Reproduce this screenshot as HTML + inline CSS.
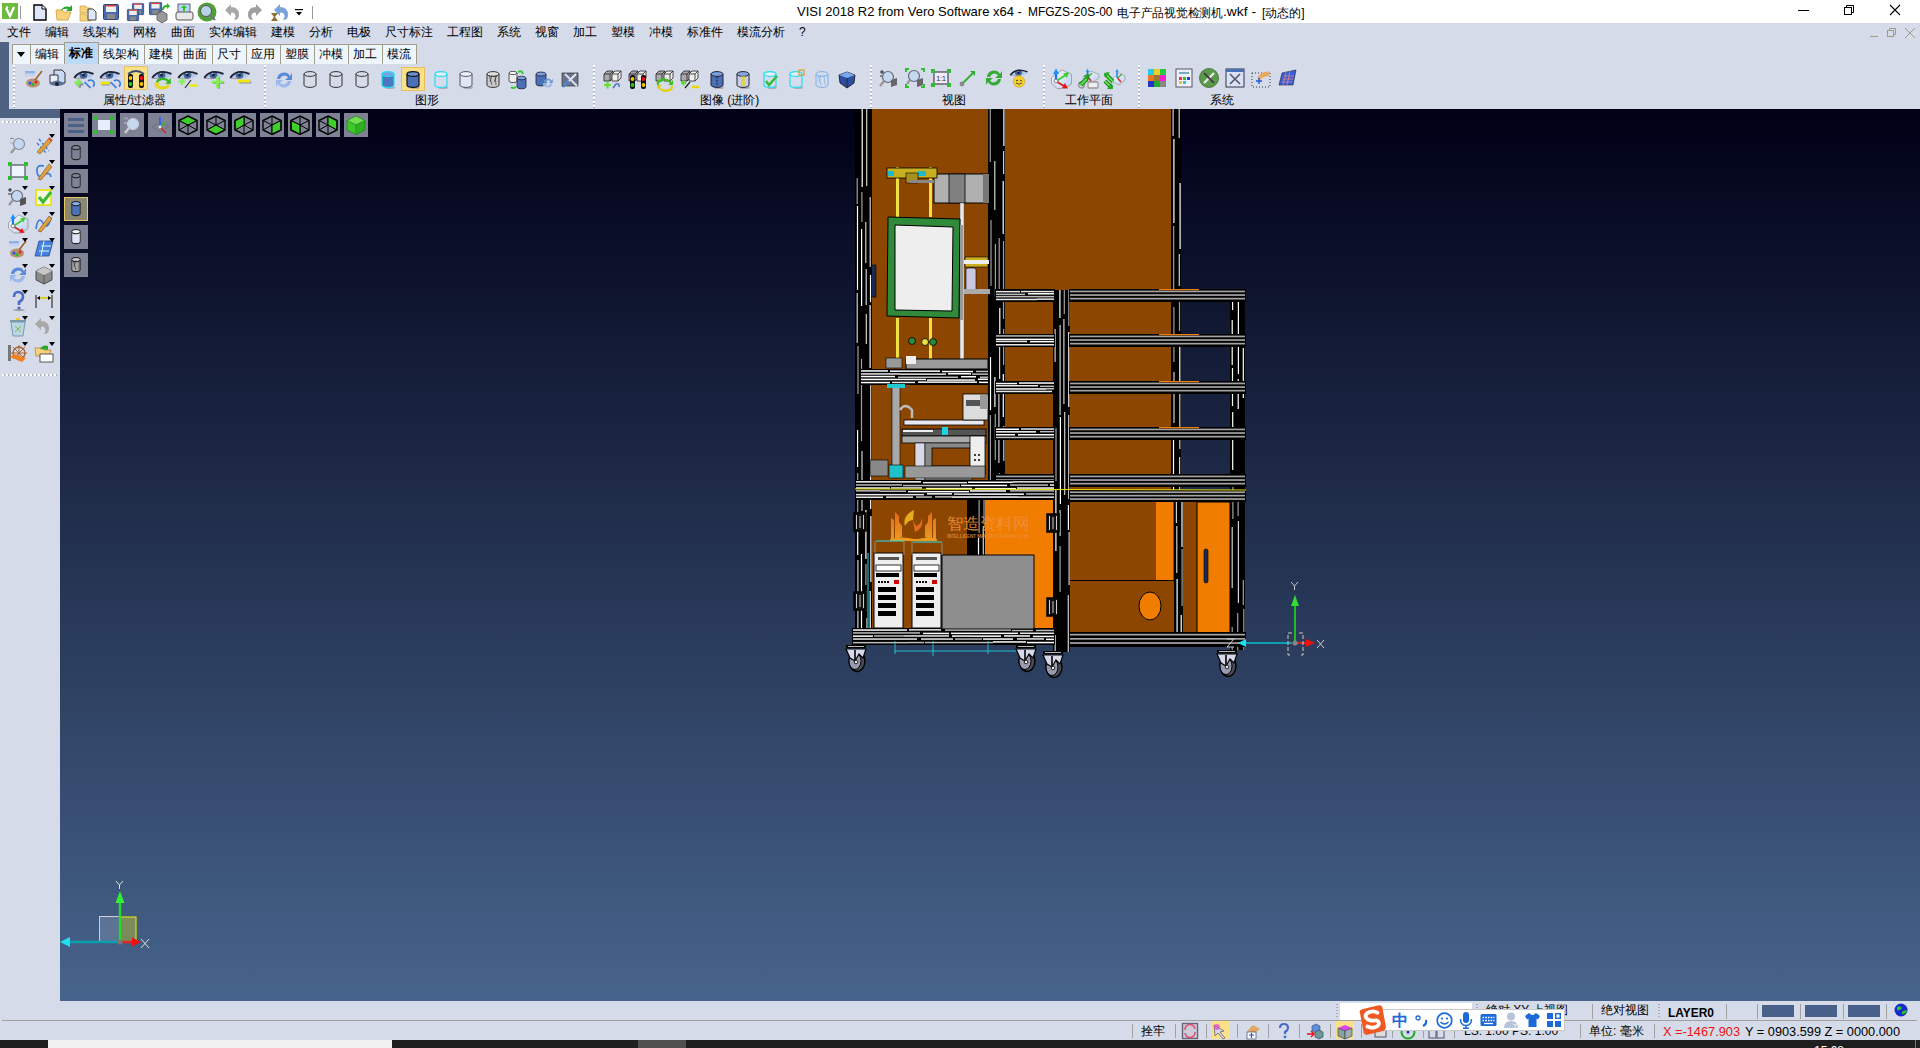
<!DOCTYPE html><html><head><meta charset="utf-8"><style>
*{margin:0;padding:0;box-sizing:border-box}
html,body{width:1920px;height:1048px;overflow:hidden;background:#d5dbe8;font-family:"Liberation Sans",sans-serif;font-size:12px;color:#000;position:relative}
.a{position:absolute}
.t{position:absolute;white-space:nowrap;font-size:12px;line-height:15px}
svg{position:absolute;overflow:visible}
</style></head><body>
<div class="a" style="left:0px;top:0px;width:1920px;height:23px;background:#fff;"></div>
<svg style="left:2px;top:3px" width="16" height="16" viewBox="0 0 16 16"><rect width="16" height="16" fill="#6cbb3c"/><path d="M4 5 L8 13 L12 4" fill="none" stroke="#fff" stroke-width="2.4"/><circle cx="5" cy="4.5" r="1.2" fill="#fff"/></svg>
<div class="a" style="left:20px;top:6px;width:1px;height:13px;background:#9a9a9a;"></div>
<svg style="left:33px;top:4px" width="14" height="17" viewBox="0 0 14 17"><path d="M1 1h8l4 4v11H1z" fill="#dfe8fb" stroke="#000" stroke-width="1.4"/><path d="M9 1v4h4" fill="#fff" stroke="#000" stroke-width="1"/></svg>
<svg style="left:55px;top:4px" width="19" height="17" viewBox="0 0 19 17"><path d="M1 6h6l2 2h7l-3 8H2z" fill="#f8d27a" stroke="#c9a040" stroke-width=".8"/><path d="M6 7 Q8 1 15 3 L17 1 L17 7 L11 7 L13 5 Q9 4 6 7z" fill="#2aa82a"/></svg>
<svg style="left:79px;top:3px" width="18" height="18" viewBox="0 0 18 18"><path d="M1 3h6l1 2h4v5H1z M1 11h6l1 2h4v5H1z" fill="#f6d27c" stroke="#c9a040" stroke-width=".7"/><path d="M9 6h5l3 3v8H9z" fill="#dfe8fb" stroke="#333" stroke-width=".9"/></svg>
<svg style="left:103px;top:4px" width="16" height="16" viewBox="0 0 16 16"><rect x="0.5" y="0.5" width="15" height="15" rx="1" fill="#4a6cae" stroke="#2b4479"/><rect x="3" y="1" width="10" height="7" fill="#eee"/><rect x="3" y="1" width="10" height="1.5" fill="#e04030"/><rect x="4" y="10" width="8" height="5" fill="#888"/></svg>
<svg style="left:132px;top:3px" width="12" height="12" viewBox="0 0 16 16"><rect x="0.5" y="0.5" width="15" height="15" rx="1" fill="#4a6cae" stroke="#2b4479"/><rect x="3" y="1" width="10" height="7" fill="#eee"/><rect x="3" y="1" width="10" height="1.5" fill="#e04030"/><rect x="4" y="10" width="8" height="5" fill="#888"/></svg>
<svg style="left:127px;top:9px" width="12" height="12" viewBox="0 0 16 16"><rect x="0.5" y="0.5" width="15" height="15" rx="1" fill="#4a6cae" stroke="#2b4479"/><rect x="3" y="1" width="10" height="7" fill="#eee"/><rect x="3" y="1" width="10" height="1.5" fill="#e04030"/><rect x="4" y="10" width="8" height="5" fill="#888"/></svg>
<svg style="left:149px;top:2px" width="13" height="13" viewBox="0 0 16 16"><rect x="0.5" y="0.5" width="15" height="15" rx="1" fill="#4a6cae" stroke="#2b4479"/><rect x="3" y="1" width="10" height="7" fill="#eee"/><rect x="3" y="1" width="10" height="1.5" fill="#e04030"/><rect x="4" y="10" width="8" height="5" fill="#888"/></svg>
<svg style="left:156px;top:10px" width="12" height="12" viewBox="0 0 12 12"><path d="M1 4l5-3 5 3v6l-5 3-5-3z" fill="#999" stroke="#555" stroke-width=".8"/></svg>
<svg style="left:160px;top:2px" width="10" height="10" viewBox="0 0 10 10"><path d="M2 8 Q2 3 7 3 L7 1 L10 4 L7 7 L7 5 Q4 5 4 8z" fill="#22bb22"/></svg>
<svg style="left:175px;top:3px" width="19" height="19" viewBox="0 0 19 19"><rect x="3" y="1" width="12" height="9" fill="#bfd4f2" stroke="#445" stroke-width=".8"/><path d="M9 2l3 3h-2v3H8V5H6z" fill="#22cc22"/><rect x="1" y="9" width="17" height="8" rx="2" fill="#e8e8e8" stroke="#555"/></svg>
<svg style="left:197px;top:2px" width="21" height="20" viewBox="0 0 21 20"><circle cx="10" cy="10" r="9.5" fill="#4fa03a"/><circle cx="9" cy="9" r="5.5" fill="#b8d2ec" stroke="#555" stroke-width="1"/><path d="M13 13l5 5" stroke="#777" stroke-width="2.4"/></svg>
<svg style="left:224px;top:3px" width="16" height="18" viewBox="0 0 16 18"><path d="M1 7 L7 1 V4 Q15 4 15 12 Q15 17 10 17 Q13 13 10 10 Q8 9 7 10 V13z" fill="#a8a8a8"/></svg>
<svg style="left:247px;top:3px" width="16" height="18" viewBox="0 0 16 18"><path d="M15 7 L9 1 V4 Q1 4 1 12 Q1 17 6 17 Q3 13 6 10 Q8 9 9 10 V13z" fill="#a0a0a0"/></svg>
<svg style="left:270px;top:3px" width="20" height="19" viewBox="0 0 20 19"><path d="M4 7 L10 1 V4 Q18 4 18 12 Q18 17 13 17 Q16 13 13 10 Q11 9 10 10 V13z" fill="#7aa4dc"/><path d="M1 10h7l-3 4 3 4H1l3-4z" fill="#8a7030"/></svg>
<svg style="left:295px;top:9px" width="8" height="7" viewBox="0 0 8 7"><rect x="0" y="0" width="8" height="1.2" fill="#000"/><path d="M1 3h6l-3 3.5z" fill="#000"/></svg>
<div class="a" style="left:312px;top:6px;width:1px;height:13px;background:#9a9a9a;"></div>
<svg style="left:797px;top:3.5999999999999996px" width="229" height="18.4" viewBox="797 3.5999999999999996 229 18.4"><text x="797" y="16" font-size="12.4" fill="#000" font-weight="normal" font-family="Liberation Sans, sans-serif" textLength="225" lengthAdjust="spacingAndGlyphs">VISI 2018 R2 from Vero Software x64 -</text></svg>
<svg style="left:1027.5px;top:3.5999999999999996px" width="88.5" height="18.4" viewBox="1027.5 3.5999999999999996 88.5 18.4"><text x="1027.5" y="16" font-size="12.4" fill="#000" font-weight="normal" font-family="Liberation Sans, sans-serif" textLength="84.5" lengthAdjust="spacingAndGlyphs">MFGZS-20S-00</text></svg>
<svg style="left:1117px;top:4.5px" width="110" height="18" viewBox="1117 4.5 110 18"><text x="1117" y="16.5" font-size="12" fill="#000" font-weight="normal" font-family="Liberation Sans, sans-serif" textLength="106" lengthAdjust="spacingAndGlyphs">电子产品视觉检测机</text></svg>
<svg style="left:1223px;top:3.5999999999999996px" width="37" height="18.4" viewBox="1223 3.5999999999999996 37 18.4"><text x="1223" y="16" font-size="12.4" fill="#000" font-weight="normal" font-family="Liberation Sans, sans-serif" textLength="33" lengthAdjust="spacingAndGlyphs">.wkf -</text></svg>
<svg style="left:1261.5px;top:4.5px" width="46.5" height="18" viewBox="1261.5 4.5 46.5 18"><text x="1261.5" y="16.5" font-size="12" fill="#000" font-weight="normal" font-family="Liberation Sans, sans-serif" textLength="42.5" lengthAdjust="spacingAndGlyphs">[动态的]</text></svg>
<div class="a" style="left:1798px;top:10px;width:11px;height:1px;background:#000;"></div>
<svg style="left:1843px;top:4px" width="12" height="12" viewBox="0 0 12 12"><rect x="1.5" y="3.5" width="7" height="7" fill="none" stroke="#000"/><path d="M3.5 3.5V1.5h7v7H8.5" fill="none" stroke="#000"/></svg>
<svg style="left:1889px;top:4px" width="12" height="12" viewBox="0 0 12 12"><path d="M1 1L11 11M11 1L1 11" stroke="#000" stroke-width="1.1"/></svg>
<div class="a" style="left:0px;top:23px;width:1920px;height:19px;background:#d5dbe8;"></div>
<div class="t" style="left:7px;top:25px;">文件</div>
<div class="t" style="left:45px;top:25px;">编辑</div>
<div class="t" style="left:83px;top:25px;">线架构</div>
<div class="t" style="left:133px;top:25px;">网格</div>
<div class="t" style="left:171px;top:25px;">曲面</div>
<div class="t" style="left:209px;top:25px;">实体编辑</div>
<div class="t" style="left:271px;top:25px;">建模</div>
<div class="t" style="left:309px;top:25px;">分析</div>
<div class="t" style="left:347px;top:25px;">电极</div>
<div class="t" style="left:385px;top:25px;">尺寸标注</div>
<div class="t" style="left:447px;top:25px;">工程图</div>
<div class="t" style="left:497px;top:25px;">系统</div>
<div class="t" style="left:535px;top:25px;">视窗</div>
<div class="t" style="left:573px;top:25px;">加工</div>
<div class="t" style="left:611px;top:25px;">塑模</div>
<div class="t" style="left:649px;top:25px;">冲模</div>
<div class="t" style="left:687px;top:25px;">标准件</div>
<div class="t" style="left:737px;top:25px;">模流分析</div>
<div class="t" style="left:799px;top:25px;">?</div>
<div class="a" style="left:1870px;top:36px;width:8px;height:1px;background:#a09a88;"></div>
<svg style="left:1887px;top:28px" width="9" height="9" viewBox="0 0 9 9"><rect x=".5" y="2.5" width="6" height="6" fill="none" stroke="#a09a88"/><path d="M2.5 2.5V.5h6v6H6.5" fill="none" stroke="#a09a88"/></svg>
<svg style="left:1905px;top:28px" width="10" height="10" viewBox="0 0 10 10"><path d="M0 0L10 10M10 0L0 10" stroke="#a09a88" stroke-width="1"/></svg>
<div class="a" style="left:0px;top:42px;width:9px;height:76px;background:#4e6181;"></div>
<div class="a" style="left:9px;top:109px;width:51px;height:9px;background:#4e6181;"></div>
<div class="a" style="left:12px;top:44px;width:19px;height:20px;background:#eef5fd;border:1px solid #a29e8a;border-bottom:none"></div>
<svg style="left:17px;top:52px" width="8" height="5" viewBox="0 0 8 5"><path d="M0 0h8l-4 5z" fill="#000"/></svg>
<div class="a" style="left:30px;top:44px;width:35px;height:20px;background:#eef5fd;border:1px solid #a29e8a;border-bottom:none"></div>
<div class="t" style="left:35px;top:47px;">编辑</div>
<div class="a" style="left:64px;top:42px;width:35px;height:22px;background:#bddaf7;border:1px solid #a29e8a;border-bottom:none"></div>
<div class="t" style="left:69px;top:46px;font-weight:bold;">标准</div>
<div class="a" style="left:98px;top:44px;width:47px;height:20px;background:#eef5fd;border:1px solid #a29e8a;border-bottom:none"></div>
<div class="t" style="left:103px;top:47px;">线架构</div>
<div class="a" style="left:144px;top:44px;width:35px;height:20px;background:#eef5fd;border:1px solid #a29e8a;border-bottom:none"></div>
<div class="t" style="left:149px;top:47px;">建模</div>
<div class="a" style="left:178px;top:44px;width:35px;height:20px;background:#eef5fd;border:1px solid #a29e8a;border-bottom:none"></div>
<div class="t" style="left:183px;top:47px;">曲面</div>
<div class="a" style="left:212px;top:44px;width:35px;height:20px;background:#eef5fd;border:1px solid #a29e8a;border-bottom:none"></div>
<div class="t" style="left:217px;top:47px;">尺寸</div>
<div class="a" style="left:246px;top:44px;width:35px;height:20px;background:#eef5fd;border:1px solid #a29e8a;border-bottom:none"></div>
<div class="t" style="left:251px;top:47px;">应用</div>
<div class="a" style="left:280px;top:44px;width:35px;height:20px;background:#eef5fd;border:1px solid #a29e8a;border-bottom:none"></div>
<div class="t" style="left:285px;top:47px;">塑膜</div>
<div class="a" style="left:314px;top:44px;width:35px;height:20px;background:#eef5fd;border:1px solid #a29e8a;border-bottom:none"></div>
<div class="t" style="left:319px;top:47px;">冲模</div>
<div class="a" style="left:348px;top:44px;width:35px;height:20px;background:#eef5fd;border:1px solid #a29e8a;border-bottom:none"></div>
<div class="t" style="left:353px;top:47px;">加工</div>
<div class="a" style="left:382px;top:44px;width:35px;height:20px;background:#eef5fd;border:1px solid #a29e8a;border-bottom:none"></div>
<div class="t" style="left:387px;top:47px;">模流</div>
<div class="a" style="left:9px;top:64px;width:1911px;height:45px;background:#d5dbe8;"></div>
<div class="a" style="left:13px;top:65px;width:2px;height:43px;background:repeating-linear-gradient(#fff 0 2px,#a8acb8 2px 3px,transparent 3px 4px)"></div>
<div class="a" style="left:264px;top:65px;width:2px;height:43px;background:repeating-linear-gradient(#fff 0 2px,#a8acb8 2px 3px,transparent 3px 4px)"></div>
<div class="a" style="left:593px;top:65px;width:2px;height:43px;background:repeating-linear-gradient(#fff 0 2px,#a8acb8 2px 3px,transparent 3px 4px)"></div>
<div class="a" style="left:870px;top:65px;width:2px;height:43px;background:repeating-linear-gradient(#fff 0 2px,#a8acb8 2px 3px,transparent 3px 4px)"></div>
<div class="a" style="left:1043px;top:65px;width:2px;height:43px;background:repeating-linear-gradient(#fff 0 2px,#a8acb8 2px 3px,transparent 3px 4px)"></div>
<div class="a" style="left:1138px;top:65px;width:2px;height:43px;background:repeating-linear-gradient(#fff 0 2px,#a8acb8 2px 3px,transparent 3px 4px)"></div>
<div class="t" style="left:103px;top:93px;">属性/过滤器</div>
<div class="t" style="left:415px;top:93px;">图形</div>
<div class="t" style="left:700px;top:93px;">图像 (进阶)</div>
<div class="t" style="left:942px;top:93px;">视图</div>
<div class="t" style="left:1065px;top:93px;">工作平面</div>
<div class="t" style="left:1210px;top:93px;">系统</div>
<svg style="left:24px;top:69px" width="20" height="20" viewBox="0 0 20 20"><rect x="1" y="2" width="10" height="2.5" fill="#8fb0e8"/><rect x="1" y="5" width="10" height="2.5" fill="#c8d4ec"/><rect x="1" y="8" width="10" height="2.5" fill="#dde"/><ellipse cx="9" cy="14" rx="7" ry="4.5" fill="#b89070"/><circle cx="6" cy="14" r="1.5" fill="#2255ee"/><circle cx="9" cy="15.5" r="1.5" fill="#22bb22"/><circle cx="12" cy="13" r="1.5" fill="#dd2222"/><path d="M11 11 L18 2" stroke="#a0602a" stroke-width="1.6"/></svg>
<svg style="left:48px;top:69px" width="20" height="20" viewBox="0 0 20 20"><path d="M6 1h8l3 3v10H6z" fill="#c9d8f4" stroke="#222" stroke-width=".9"/><path d="M2 6h8v8H2z" fill="#e8eefc" stroke="#222" stroke-width=".9"/><path d="M1 15 Q9 8 17 15 Q9 19 1 15Z" fill="#5a6f99"/><circle cx="9" cy="15" r="2" fill="#223"/></svg>
<svg style="left:74px;top:69px" width="20" height="20" viewBox="0 0 20 20"><path d="M0 9 Q6 0 20 5 Q17 9.5 10 9.5 Q4 10 0 9Z" fill="#b4c8ec"/><circle cx="9.5" cy="5.8" r="3.9" fill="#4a6a9e"/><circle cx="9.5" cy="6" r="1.5" fill="#16243a"/><circle cx="8.7" cy="3.9" r=".9" fill="#dfe8ff"/><path d="M0.3 9 Q6 -0.5 19.5 4.8" fill="none" stroke="#1c2232" stroke-width="1.9"/><path d="M0.5 9.2 Q5 10 10 9.6" fill="none" stroke="#a07080" stroke-width=".6"/><path d="M1.5 14.5h7M5 11v7" stroke="#333" stroke-width="2.4" opacity=".45" transform="translate(.8 .8)"/><path d="M0.5 13.5h7.5M4.2 9.8v7.6" stroke="#80f050" stroke-width="2.4"/><path d="M10.5 13 L16.5 19" stroke="#3a78e0" stroke-width="1.7"/><path d="M14 12 A3.6 3.6 0 0 1 19 17.5" fill="none" stroke="#3a78e0" stroke-width="1.7"/></svg>
<svg style="left:100px;top:69px" width="20" height="20" viewBox="0 0 20 20"><path d="M0 9 Q6 0 20 5 Q17 9.5 10 9.5 Q4 10 0 9Z" fill="#b4c8ec"/><circle cx="9.5" cy="5.8" r="3.9" fill="#4a6a9e"/><circle cx="9.5" cy="6" r="1.5" fill="#16243a"/><circle cx="8.7" cy="3.9" r=".9" fill="#dfe8ff"/><path d="M0.3 9 Q6 -0.5 19.5 4.8" fill="none" stroke="#1c2232" stroke-width="1.9"/><path d="M0.5 9.2 Q5 10 10 9.6" fill="none" stroke="#a07080" stroke-width=".6"/><path d="M1 14.5h8" stroke="#555" stroke-width="2.6" opacity=".4" transform="translate(.8 .8)"/><path d="M0.5 14h8.5" stroke="#f0e800" stroke-width="2.6"/><path d="M10.5 13 L16.5 19" stroke="#3a78e0" stroke-width="1.7"/><path d="M14 12 A3.6 3.6 0 0 1 19 17.5" fill="none" stroke="#3a78e0" stroke-width="1.7"/></svg>
<div class="a" style="left:124px;top:66px;width:24px;height:24px;background:#fbe08a;border:1px solid #e8c060"></div>
<svg style="left:126px;top:69px" width="20" height="20" viewBox="0 0 20 20"><rect x="2" y="5" width="5" height="14" rx="2" fill="#111"/><rect x="13" y="5" width="5" height="14" rx="2" fill="#111"/><circle cx="4.5" cy="9" r="1.9" fill="#f5c400"/><circle cx="4.5" cy="15" r="1.9" fill="#22cc22"/><circle cx="15.5" cy="9" r="1.9" fill="#ee1111"/><circle cx="15.5" cy="15" r="1.9" fill="#f5c400"/><path d="M2 5 Q10 -1 18 5" fill="none" stroke="#3a4a70" stroke-width="2"/></svg>
<svg style="left:152px;top:69px" width="20" height="20" viewBox="0 0 20 20"><path d="M0 9 Q6 0 20 5 Q17 9.5 10 9.5 Q4 10 0 9Z" fill="#b4c8ec"/><circle cx="9.5" cy="5.8" r="3.9" fill="#4a6a9e"/><circle cx="9.5" cy="6" r="1.5" fill="#16243a"/><circle cx="8.7" cy="3.9" r=".9" fill="#dfe8ff"/><path d="M0.3 9 Q6 -0.5 19.5 4.8" fill="none" stroke="#1c2232" stroke-width="1.9"/><path d="M0.5 9.2 Q5 10 10 9.6" fill="none" stroke="#a07080" stroke-width=".6"/><path d="M4 13 A7 4.5 0 0 1 17 11 L18.5 8.5 L19 15 L13 14.5 L15.5 12.8 A5 3 0 0 0 6 14Z" fill="#33b81e"/><path d="M17.5 15.5 A7 4.5 0 0 1 4 17.5 L3 19.5 L2.5 13.5 L8.5 14 L6 15.8 A5 3 0 0 0 15.5 15Z" fill="#e8d810"/></svg>
<svg style="left:178px;top:69px" width="20" height="20" viewBox="0 0 20 20"><path d="M0 9 Q6 0 20 5 Q17 9.5 10 9.5 Q4 10 0 9Z" fill="#b4c8ec"/><circle cx="9.5" cy="5.8" r="3.9" fill="#4a6a9e"/><circle cx="9.5" cy="6" r="1.5" fill="#16243a"/><circle cx="8.7" cy="3.9" r=".9" fill="#dfe8ff"/><path d="M0.3 9 Q6 -0.5 19.5 4.8" fill="none" stroke="#1c2232" stroke-width="1.9"/><path d="M0.5 9.2 Q5 10 10 9.6" fill="none" stroke="#a07080" stroke-width=".6"/><path d="M0.5 12.5h7M4 9v7" stroke="#80f050" stroke-width="2.2"/><path d="M7 19 L13 11" stroke="#222" stroke-width="1.1"/><path d="M11.5 16.5h8" stroke="#f0e800" stroke-width="2.4"/></svg>
<svg style="left:204px;top:69px" width="20" height="20" viewBox="0 0 20 20"><path d="M0 9 Q6 0 20 5 Q17 9.5 10 9.5 Q4 10 0 9Z" fill="#b4c8ec"/><circle cx="9.5" cy="5.8" r="3.9" fill="#4a6a9e"/><circle cx="9.5" cy="6" r="1.5" fill="#16243a"/><circle cx="8.7" cy="3.9" r=".9" fill="#dfe8ff"/><path d="M0.3 9 Q6 -0.5 19.5 4.8" fill="none" stroke="#1c2232" stroke-width="1.9"/><path d="M0.5 9.2 Q5 10 10 9.6" fill="none" stroke="#a07080" stroke-width=".6"/><path d="M8.5 13h11M14 7.5v11.5" stroke="#444" stroke-width="2.6" opacity=".4" transform="translate(.8 .8)"/><path d="M8 13h11M13.5 7.5v11.5" stroke="#80f050" stroke-width="2.6"/></svg>
<svg style="left:230px;top:69px" width="20" height="20" viewBox="0 0 20 20"><path d="M0 9 Q6 0 20 5 Q17 9.5 10 9.5 Q4 10 0 9Z" fill="#b4c8ec"/><circle cx="9.5" cy="5.8" r="3.9" fill="#4a6a9e"/><circle cx="9.5" cy="6" r="1.5" fill="#16243a"/><circle cx="8.7" cy="3.9" r=".9" fill="#dfe8ff"/><path d="M0.3 9 Q6 -0.5 19.5 4.8" fill="none" stroke="#1c2232" stroke-width="1.9"/><path d="M0.5 9.2 Q5 10 10 9.6" fill="none" stroke="#a07080" stroke-width=".6"/><path d="M8.5 12.5h12" stroke="#555" stroke-width="2.8" opacity=".4" transform="translate(.8 .8)"/><path d="M8 12h12" stroke="#f0e800" stroke-width="2.8"/></svg>
<svg style="left:274px;top:70px" width="20" height="20" viewBox="0 0 20 20"><path d="M3 9 A7 7 0 0 1 16 6 L18 3 L18 10 L11 10 L14 7.5 A4.5 4.5 0 0 0 6 9Z" fill="#5a8ad8"/><path d="M17 11 A7 7 0 0 1 4 14 L2 17 L2 10 L9 10 L6 12.5 A4.5 4.5 0 0 0 14 11Z" fill="#9ab8ea"/></svg>
<svg style="left:300px;top:70px" width="20" height="20" viewBox="0 0 20 20"><path d="M4 4v11a6 2.4 0 0 0 12 0V4" fill="none" stroke="#333" stroke-width="1"/><ellipse cx="10" cy="4" rx="6" ry="2.4" fill="none" stroke="#333" stroke-width="1"/></svg>
<svg style="left:326px;top:70px" width="20" height="20" viewBox="0 0 20 20"><path d="M4 4v11a6 2.4 0 0 0 12 0V4" fill="none" stroke="#333" stroke-width="1"/><ellipse cx="10" cy="4" rx="6" ry="2.4" fill="none" stroke="#333" stroke-width="1"/></svg>
<svg style="left:352px;top:70px" width="20" height="20" viewBox="0 0 20 20"><path d="M4 4v11a6 2.4 0 0 0 12 0V4" fill="none" stroke="#333" stroke-width="1"/><ellipse cx="10" cy="4" rx="6" ry="2.4" fill="none" stroke="#333" stroke-width="1"/></svg>
<svg style="left:378px;top:70px" width="20" height="20" viewBox="0 0 20 20"><ellipse cx="12" cy="17.5" rx="5" ry="1.5" fill="#555" opacity=".35"/><path d="M4 4v11a6 2.4 0 0 0 12 0V4" fill="#4a78c0" stroke="#22e0f0" stroke-width="1.2"/><ellipse cx="10" cy="4" rx="6" ry="2.4" fill="#7aa0e0" stroke="#22e0f0" stroke-width="1.2"/></svg>
<div class="a" style="left:401px;top:67px;width:24px;height:24px;background:#fbe08a;border:1px solid #e8c060"></div>
<svg style="left:403px;top:70px" width="20" height="20" viewBox="0 0 20 20"><ellipse cx="12" cy="17.5" rx="5" ry="1.5" fill="#555" opacity=".35"/><path d="M4 4v11a6 2.4 0 0 0 12 0V4" fill="#4a70b8" stroke="#111" stroke-width="1.2"/><ellipse cx="10" cy="4" rx="6" ry="2.4" fill="#6a90d0" stroke="#111" stroke-width="1.2"/></svg>
<svg style="left:431px;top:70px" width="20" height="20" viewBox="0 0 20 20"><ellipse cx="12" cy="17.5" rx="5" ry="1.5" fill="#555" opacity=".35"/><path d="M4 4v11a6 2.4 0 0 0 12 0V4" fill="#d6dcee" stroke="#22e0f0" stroke-width="1.2"/><ellipse cx="10" cy="4" rx="6" ry="2.4" fill="#e8ecf8" stroke="#22e0f0" stroke-width="1.2"/></svg>
<svg style="left:456px;top:70px" width="20" height="20" viewBox="0 0 20 20"><ellipse cx="12" cy="17.5" rx="5" ry="1.5" fill="#555" opacity=".35"/><path d="M4 4v11a6 2.4 0 0 0 12 0V4" fill="#dfe6f6" stroke="#555" stroke-width="1"/><ellipse cx="10" cy="4" rx="6" ry="2.4" fill="#eef" stroke="#555" stroke-width="1"/></svg>
<svg style="left:483px;top:70px" width="20" height="20" viewBox="0 0 20 20"><path d="M4 4v11a6 2.4 0 0 0 12 0V4" fill="#ccc" stroke="#333" stroke-width="1"/><ellipse cx="10" cy="4" rx="6" ry="2.4" fill="#ddd" stroke="#333" stroke-width="1"/><path d="M6 5 L9 15 M9 5 L7 12 M12 5 L13 15 M14 5 L11 12" stroke="#333" stroke-width=".7"/></svg>
<svg style="left:508px;top:70px" width="20" height="20" viewBox="0 0 20 20"><path d="M1 3v8a4 1.6 0 0 0 8 0V3" fill="#eee" stroke="#333" stroke-width=".8"/><ellipse cx="5" cy="3" rx="4" ry="1.6" fill="#fff" stroke="#333" stroke-width=".8"/><path d="M9 8v9a4.5 1.8 0 0 0 9 0V8" fill="#4a70b8" stroke="#223" stroke-width=".8"/><ellipse cx="13.5" cy="8" rx="4.5" ry="1.8" fill="#7aa0e0" stroke="#223" stroke-width=".8"/><path d="M10 2 Q14 0 15 4" stroke="#33cc33" stroke-width="2" fill="none"/><path d="M3 17 Q5 19 8 17" stroke="#33cc33" stroke-width="2" fill="none"/></svg>
<svg style="left:535px;top:70px" width="20" height="20" viewBox="0 0 20 20"><path d="M1 4v10a5 2 0 0 0 10 0V4" fill="#4a70b8" stroke="#223" stroke-width=".8"/><ellipse cx="6" cy="4" rx="5" ry="2" fill="#7aa0e0" stroke="#223" stroke-width=".8"/><g transform="translate(7 7) scale(.6)"><path d="M3 9 A7 7 0 0 1 16 6 L18 3 L18 10 L11 10 L14 7.5 A4.5 4.5 0 0 0 6 9Z" fill="#6a98d8"/><path d="M17 11 A7 7 0 0 1 4 14 L2 17 L2 10 L9 10 L6 12.5 A4.5 4.5 0 0 0 14 11Z" fill="#9ab8ea"/></g></svg>
<svg style="left:561px;top:70px" width="20" height="20" viewBox="0 0 20 20"><rect x="1" y="3" width="16" height="13" fill="#6a7488" stroke="#333" stroke-width=".7"/><path d="M3 16 L15 4" stroke="#eee" stroke-width="2"/><path d="M4 4 L16 16" stroke="#dde" stroke-width="2"/><path d="M2 17 L8 11" stroke="#3a7ad8" stroke-width="2.2"/></svg>
<svg style="left:603px;top:70px" width="20" height="20" viewBox="0 0 20 20"><path d="M1 4 L4 1 H10 V8 L7 11 H1Z" fill="#aaa" stroke="#222" stroke-width=".8"/><path d="M1 4 H7 V11 M7 4 L10 1" fill="none" stroke="#222" stroke-width=".8"/><path d="M9 4 L12 1 H18 V8 L15 11 H9Z" fill="#eee" stroke="#222" stroke-width=".8"/><path d="M9 4 H15 V11 M15 4 L18 1" fill="none" stroke="#222" stroke-width=".8"/><path d="M1 15h7M4.5 11.5v7" stroke="#66dd33" stroke-width="2.2"/><path d="M10 18 L13 14 Q17 13 16 17" fill="none" stroke="#4a78c8" stroke-width="1.6"/></svg>
<svg style="left:628px;top:70px" width="20" height="20" viewBox="0 0 20 20"><path d="M1 4 L4 1 H10 V8 L7 11 H1Z" fill="#aaa" stroke="#222" stroke-width=".8"/><path d="M1 4 H7 V11 M7 4 L10 1" fill="none" stroke="#222" stroke-width=".8"/><path d="M9 4 L12 1 H18 V8 L15 11 H9Z" fill="#eee" stroke="#222" stroke-width=".8"/><path d="M9 4 H15 V11 M15 4 L18 1" fill="none" stroke="#222" stroke-width=".8"/><rect x="2" y="5" width="5" height="14" rx="2" fill="#111"/><rect x="13" y="5" width="5" height="14" rx="2" fill="#111"/><circle cx="4.5" cy="9" r="1.9" fill="#f5c400"/><circle cx="4.5" cy="15" r="1.9" fill="#22cc22"/><circle cx="15.5" cy="9" r="1.9" fill="#ee1111"/><circle cx="15.5" cy="15" r="1.9" fill="#f5c400"/></svg>
<svg style="left:655px;top:70px" width="20" height="20" viewBox="0 0 20 20"><path d="M1 4 L4 1 H10 V8 L7 11 H1Z" fill="#aaa" stroke="#222" stroke-width=".8"/><path d="M1 4 H7 V11 M7 4 L10 1" fill="none" stroke="#222" stroke-width=".8"/><path d="M9 4 L12 1 H18 V8 L15 11 H9Z" fill="#eee" stroke="#222" stroke-width=".8"/><path d="M9 4 H15 V11 M15 4 L18 1" fill="none" stroke="#222" stroke-width=".8"/><path d="M2 15 A7 5 0 0 1 16 12 L18 10 L18 15 L13 15 L15 13.5 A5 3 0 0 0 4 15Z" fill="#44bb22"/><path d="M18 16 A7 5 0 0 1 4 18 L2 20 L2 15 L7 15 L5 16.5 A5 3 0 0 0 16 16Z" fill="#e0d010"/></svg>
<svg style="left:680px;top:70px" width="20" height="20" viewBox="0 0 20 20"><path d="M1 4 L4 1 H10 V8 L7 11 H1Z" fill="#aaa" stroke="#222" stroke-width=".8"/><path d="M1 4 H7 V11 M7 4 L10 1" fill="none" stroke="#222" stroke-width=".8"/><path d="M9 4 L12 1 H18 V8 L15 11 H9Z" fill="#eee" stroke="#222" stroke-width=".8"/><path d="M9 4 H15 V11 M15 4 L18 1" fill="none" stroke="#222" stroke-width=".8"/><path d="M1 13h5M3.5 10.5v5" stroke="#66dd33" stroke-width="2"/><path d="M5 18L10 12" stroke="#222" stroke-width="1.2"/><path d="M12 17h7" stroke="#e8d800" stroke-width="2.4"/></svg>
<svg style="left:707px;top:70px" width="20" height="20" viewBox="0 0 20 20"><ellipse cx="12" cy="17.5" rx="5" ry="1.5" fill="#555" opacity=".35"/><path d="M4 4v11a6 2.4 0 0 0 12 0V4" fill="#4a70b8" stroke="#223" stroke-width="1"/><ellipse cx="10" cy="4" rx="6" ry="2.4" fill="#7aa0e0" stroke="#223" stroke-width="1"/><path d="M10 7v9" stroke="#111" stroke-width="1" stroke-dasharray="1.5 1.5"/></svg>
<svg style="left:733px;top:70px" width="20" height="20" viewBox="0 0 20 20"><ellipse cx="12" cy="17.5" rx="5" ry="1.5" fill="#555" opacity=".35"/><path d="M4 4v11a6 2.4 0 0 0 12 0V4" fill="#c8d0e8" stroke="#223" stroke-width="1"/><ellipse cx="10" cy="4" rx="6" ry="2.4" fill="#8aa8e0" stroke="#223" stroke-width="1"/><path d="M9 6v10M11 6v10" stroke="#e8d000" stroke-width="1.2"/></svg>
<svg style="left:760px;top:70px" width="20" height="20" viewBox="0 0 20 20"><ellipse cx="12" cy="17.5" rx="5" ry="1.5" fill="#555" opacity=".35"/><path d="M4 4v11a6 2.4 0 0 0 12 0V4" fill="#d6dcee" stroke="#22e0f0" stroke-width="1.2"/><ellipse cx="10" cy="4" rx="6" ry="2.4" fill="#e8ecf8" stroke="#22e0f0" stroke-width="1.2"/><path d="M6 11 L9 15 L17 6" fill="none" stroke="#33bb33" stroke-width="2.4"/></svg>
<svg style="left:786px;top:70px" width="20" height="20" viewBox="0 0 20 20"><ellipse cx="12" cy="17.5" rx="5" ry="1.5" fill="#555" opacity=".35"/><path d="M4 4v11a6 2.4 0 0 0 12 0V4" fill="#d6dcee" stroke="#22e0f0" stroke-width="1.2"/><ellipse cx="10" cy="4" rx="6" ry="2.4" fill="#e8ecf8" stroke="#22e0f0" stroke-width="1.2"/><rect x="13" y="0" width="5" height="5" fill="none" stroke="#e09a30" stroke-width="1.2"/></svg>
<svg style="left:812px;top:70px" width="20" height="20" viewBox="0 0 20 20"><path d="M4 4v11a6 2.4 0 0 0 12 0V4" fill="none" stroke="#7ab0ec" stroke-width="1"/><ellipse cx="10" cy="4" rx="6" ry="2.4" fill="none" stroke="#7ab0ec" stroke-width="1"/><path d="M6 5 L9 15 M9 5 L7 12 M12 5 L13 15" stroke="#7ab0ec" stroke-width=".7"/></svg>
<svg style="left:837px;top:70px" width="20" height="20" viewBox="0 0 20 20"><path d="M2 5 L10 2 L18 5 L17 13 L10 18 L3 13Z" fill="#2d4ea0" stroke="#111" stroke-width=".8"/><path d="M2 5 L10 8 L18 5 L10 2Z" fill="#7aa8ee"/><path d="M10 8 V18" stroke="#111" stroke-width=".6"/></svg>
<svg style="left:879px;top:68px" width="20" height="20" viewBox="0 0 20 20"><path d="M1 4h4M3 2v4M1 8h4" stroke="#000" stroke-width=".8"/><circle cx="9" cy="9" r="5.5" fill="#c4d8f0" stroke="#667" stroke-width="1.2"/><path d="M5 13 L1 18" stroke="#999" stroke-width="2.4"/><path d="M12 12 l6 -2 v7 l-6 2z" fill="#666"/></svg>
<svg style="left:905px;top:68px" width="20" height="20" viewBox="0 0 20 20"><circle cx="9" cy="8" r="5.5" fill="#c4d8f0" stroke="#667" stroke-width="1.2"/><path d="M5 12 L2 16" stroke="#999" stroke-width="2.4"/><path d="M12 12 l6 -2 v7 l-6 2z" fill="#666"/><path d="M0 0h4v2H2v2H0zM20 0h-4v2h2v2h2zM0 20h4v-2H2v-2H0zM20 20h-4v-2h2v-2h2z" fill="#33bb33"/></svg>
<svg style="left:931px;top:68px" width="20" height="20" viewBox="0 0 20 20"><rect x="3" y="4" width="14" height="12" fill="#eef" stroke="#223" stroke-width="1"/><text x="10" y="13" font-size="7" text-anchor="middle" fill="#223" font-family="Liberation Sans">1:1</text><path d="M0 1h4v4H0zM16 1h4v4h-4zM0 15h4v4H0zM16 15h4v4h-4z" fill="#33bb33"/></svg>
<svg style="left:958px;top:68px" width="20" height="20" viewBox="0 0 20 20"><path d="M4 16 L16 4" stroke="#33aa33" stroke-width="1.8"/><path d="M12 3 L17 3 L17 8z" fill="#33aa33"/><circle cx="4" cy="16" r="2.4" fill="#888"/></svg>
<svg style="left:984px;top:68px" width="20" height="20" viewBox="0 0 20 20"><path d="M3 9 A7 7 0 0 1 16 6 L18 3 L18 10 L11 10 L14 7.5 A4.5 4.5 0 0 0 6 9Z" fill="#33aa33"/><path d="M17 11 A7 7 0 0 1 4 14 L2 17 L2 10 L9 10 L6 12.5 A4.5 4.5 0 0 0 14 11Z" fill="#33aa33"/></svg>
<svg style="left:1009px;top:68px" width="20" height="20" viewBox="0 0 20 20"><g transform="translate(1 0) scale(.9 .8)"><path d="M0 9 Q6 0 20 5 Q17 9.5 10 9.5 Q4 10 0 9Z" fill="#b4c8ec"/><circle cx="9.5" cy="5.8" r="3.9" fill="#4a6a9e"/><circle cx="9.5" cy="6" r="1.5" fill="#16243a"/><circle cx="8.7" cy="3.9" r=".9" fill="#dfe8ff"/><path d="M0.3 9 Q6 -0.5 19.5 4.8" fill="none" stroke="#1c2232" stroke-width="1.9"/><path d="M0.5 9.2 Q5 10 10 9.6" fill="none" stroke="#a07080" stroke-width=".6"/></g><circle cx="10" cy="13.5" r="5.8" fill="#f5d030" stroke="#c8a020" stroke-width=".6"/><circle cx="8" cy="12.5" r=".8" fill="#333"/><circle cx="12" cy="12.5" r=".8" fill="#333"/><path d="M7 15 Q10 17.5 13 15" stroke="#333" fill="none" stroke-width=".8"/></svg>
<svg style="left:1051px;top:68px" width="22" height="21" viewBox="0 0 22 21"><defs><linearGradient id="pg" x1="0" y1="0" x2="1" y2="1"><stop offset="0" stop-color="#fafcff"/><stop offset="1" stop-color="#b8cef0"/></linearGradient></defs><path d="M0.5 9.5 L11 2 L20.5 6.5 L20.5 16 L14 20.5 L6 20.5 L0.5 15Z" fill="url(#pg)" stroke="#8a8a8a" stroke-width=".7"/><path d="M5 13 V5" stroke="#1a78ff" stroke-width="2.4"/><path d="M2 6 L5 0.5 L8 6Z" fill="#1a90ff"/><path d="M5.5 13 L14 7.5" stroke="#44cc33" stroke-width="2"/><path d="M12 5.5 L18 4 L16 10Z" fill="#44cc33"/><path d="M5.5 13.5 L13 18" stroke="#dd2222" stroke-width="2"/><path d="M11 20 L17 20.5 L14 15Z" fill="#ee1111"/><circle cx="5" cy="13" r="2" fill="#f4f4f4" stroke="#444" stroke-width=".6"/></svg>
<svg style="left:1078px;top:68px" width="22" height="21" viewBox="0 0 22 21"><path d="M5 9 L13 3 L21 6.5 L21 10 L13 15 L6 12Z" fill="url(#pg)" stroke="#8a8a8a" stroke-width=".6"/><path d="M9.5 9 V3" stroke="#1a78ff" stroke-width="1.6"/><path d="M7.8 4 L9.5 0.5 L11.2 4Z" fill="#1a90ff"/><path d="M10 9 L14 5" stroke="#44aa33" stroke-width="1.6"/><path d="M10 9 L13 13" stroke="#dd2222" stroke-width="1.6"/><circle cx="3.5" cy="17" r="3" fill="none" stroke="#999" stroke-width="1.4"/><rect x="10" y="14" width="10" height="6" rx="1" fill="#eee" stroke="#999" stroke-width="1.3"/><path d="M2.5 17 L9 10.5" stroke="#118811" stroke-width="4.4"/><path d="M2.5 17 L9 10.5" stroke="#55dd44" stroke-width="2.4"/><path d="M6 8 L11 6.5 L10 12Z" fill="#22aa22" stroke="#118811" stroke-width=".6"/></svg>
<svg style="left:1104px;top:68px" width="22" height="21" viewBox="0 0 22 21"><path d="M8 11 L15 5 L21 8 L21 12 L15 17 L9 14Z" fill="url(#pg)" stroke="#8a8a8a" stroke-width=".6"/><path d="M13 10 V3" stroke="#1a78ff" stroke-width="1.4"/><path d="M11.5 4 L13 0.8 L14.5 4Z" fill="#1a90ff"/><path d="M13.5 10 L18 6" stroke="#44aa33" stroke-width="1.4"/><path d="M13.5 10 L17 14" stroke="#dd2222" stroke-width="1.4"/><path d="M1.5 6 L9 13.5 M1 13 L8 20" stroke="#118811" stroke-width="4"/><path d="M1.5 6 L9 13.5 M1 13 L8 20" stroke="#66dd55" stroke-width="1.8"/><path d="M0 5 L6 4 L1 10Z M9 21 L3 21 L8 15Z" fill="#22aa22"/></svg>
<svg style="left:1147px;top:68px" width="20" height="20" viewBox="0 0 20 20"><rect x="1" y="1" width="6" height="6" fill="#22ccee"/><rect x="7" y="1" width="6" height="6" fill="#eecc22"/><rect x="13" y="1" width="6" height="6" fill="#22cc44"/><rect x="1" y="7" width="6" height="6" fill="#ee7722"/><rect x="7" y="7" width="6" height="6" fill="#997733"/><rect x="13" y="7" width="6" height="6" fill="#ee22cc"/><rect x="1" y="13" width="6" height="6" fill="#2233cc"/><rect x="7" y="13" width="6" height="6" fill="#22aa33"/><rect x="13" y="13" width="6" height="6" fill="#888"/></svg>
<svg style="left:1175px;top:68px" width="20" height="20" viewBox="0 0 20 20"><rect x="1" y="1" width="16" height="18" fill="#eef2fa" stroke="#556" stroke-width="1"/><rect x="4" y="4" width="10" height="2" fill="#7ab"/><rect x="4" y="9" width="3" height="3" fill="#e33"/><rect x="8" y="9" width="3" height="3" fill="#3b3"/><rect x="12" y="9" width="3" height="3" fill="#33e"/><rect x="4" y="13" width="3" height="3" fill="#eb3"/><rect x="8" y="13" width="3" height="3" fill="#3be"/></svg>
<svg style="left:1199px;top:68px" width="20" height="20" viewBox="0 0 20 20"><circle cx="10" cy="10" r="9.5" fill="#5a9a48" stroke="#3a6a30" stroke-width=".8"/><path d="M5 15 L15 5" stroke="#e8e8e8" stroke-width="2.4"/><path d="M5 5 L15 15" stroke="#444" stroke-width="2"/></svg>
<svg style="left:1225px;top:68px" width="20" height="20" viewBox="0 0 20 20"><rect x="1" y="1" width="18" height="18" fill="#d8e4f6" stroke="#334" stroke-width="1"/><rect x="1" y="1" width="18" height="3" fill="#4a70b8"/><path d="M5 16 L15 6 M5 6 L15 16" stroke="#556" stroke-width="1.6"/></svg>
<svg style="left:1251px;top:68px" width="20" height="20" viewBox="0 0 20 20"><rect x="1" y="5" width="18" height="14" fill="none" stroke="#334" stroke-dasharray="1 2"/><path d="M6 10 Q12 2 19 4 L18 8 Q12 8 9 12z" fill="#e8a860"/><path d="M5 13h6M8 10v6" stroke="#2255dd" stroke-width="1.4"/></svg>
<svg style="left:1278px;top:68px" width="20" height="20" viewBox="0 0 20 20"><path d="M4 5 L18 2 L15 17 L1 17Z" fill="#3a5ed8" stroke="#223" stroke-width=".6"/><path d="M6 8h10M5 11h10M4 14h10M8 4l-3 13M12 3l-3 14" stroke="#e88" stroke-width=".7"/></svg>
<div class="a" style="left:0px;top:118px;width:60px;height:883px;background:#d5dbe8;"></div>
<div class="a" style="left:2px;top:121px;width:56px;height:2px;background:repeating-linear-gradient(90deg,#fff 0 2px,#a8acb8 2px 3px,transparent 3px 4px)"></div>
<div class="a" style="left:2px;top:374px;width:56px;height:2px;background:repeating-linear-gradient(90deg,#fff 0 2px,#a8acb8 2px 3px,transparent 3px 4px)"></div>
<svg style="left:8px;top:135px" width="20" height="20" viewBox="0 0 20 20"><circle cx="11" cy="9" r="5.5" fill="#c4d8f0" stroke="#889" stroke-width="1.2"/><path d="M7 13 L3 18" stroke="#999" stroke-width="2.4"/><path d="M2 4 Q4 2 6 4 M2 8h3" stroke="#aab" stroke-width="1"/></svg>
<svg style="left:34px;top:135px" width="20" height="20" viewBox="0 0 20 20"><path d="M5 4 L15 16 M3 8 L13 19" stroke="#3a7ad8" stroke-width="1.4" stroke-dasharray="3 2"/><path d="M3 17 L15 3 L18 6 L6 19z" fill="#e0a040" stroke="#7a5020" stroke-width=".6"/><path d="M15 3 L18 6" stroke="#e04040" stroke-width="2"/></svg>
<svg style="left:49px;top:134px" width="6" height="4" viewBox="0 0 6 4"><path d="M0 0h6l-3 4z" fill="#000"/></svg>
<svg style="left:8px;top:161px" width="20" height="20" viewBox="0 0 20 20"><rect x="3" y="4" width="14" height="12" fill="#eef4fc" stroke="#333" stroke-width="1"/><path d="M0 1h4v4H0zM16 1h4v4h-4zM0 15h4v4H0zM16 15h4v4h-4z" fill="#33bb33"/></svg>
<svg style="left:34px;top:161px" width="20" height="20" viewBox="0 0 20 20"><path d="M10 5 Q2 3 3 11 Q4 18 10 14 Q16 10 17 16" fill="none" stroke="#3a7ad8" stroke-width="1.6"/><path d="M4 18 L15 3 L18 6 L7 19z" fill="#e0a040" stroke="#7a5020" stroke-width=".6"/></svg>
<svg style="left:49px;top:160px" width="6" height="4" viewBox="0 0 6 4"><path d="M0 0h6l-3 4z" fill="#000"/></svg>
<svg style="left:8px;top:187px" width="20" height="20" viewBox="0 0 20 20"><path d="M0 3h4M2 1v4M0 7h4" stroke="#000" stroke-width=".8"/><circle cx="9" cy="9" r="5.5" fill="#c4d8f0" stroke="#667" stroke-width="1.2"/><path d="M5 13 L1 18" stroke="#999" stroke-width="2.4"/><path d="M12 12 l6 -2 v7 l-6 2z" fill="#555"/></svg>
<svg style="left:34px;top:187px" width="20" height="20" viewBox="0 0 20 20"><rect x="2" y="3" width="15" height="15" fill="#f8f8e0" stroke="#e8e000" stroke-width="1.6"/><path d="M5 10 L9 15 L17 5" fill="none" stroke="#33bb33" stroke-width="3"/></svg>
<svg style="left:22px;top:186px" width="6" height="4" viewBox="0 0 6 4"><path d="M0 0h6l-3 4z" fill="#000"/></svg>
<svg style="left:49px;top:186px" width="6" height="4" viewBox="0 0 6 4"><path d="M0 0h6l-3 4z" fill="#000"/></svg>
<svg style="left:8px;top:213px" width="20" height="20" viewBox="0 0 20 20"><path d="M0.5 9.5 L11 2 L20 6.5 L20 15.5 L14 20 L6 20 L0.5 15Z" fill="url(#pg)" stroke="#8a8a8a" stroke-width=".7"/><path d="M5 13 V5" stroke="#1a78ff" stroke-width="2.2"/><path d="M2.3 6 L5 1 L7.7 6Z" fill="#1a90ff"/><path d="M5.5 13 L14 7.5" stroke="#44cc33" stroke-width="1.8"/><path d="M12 5.5 L17.5 4.5 L15.5 9.5Z" fill="#44cc33"/><path d="M5.5 13.5 L13 18" stroke="#dd2222" stroke-width="1.8"/><path d="M11 19.5 L16.5 20 L14 15Z" fill="#ee1111"/><circle cx="5" cy="13" r="1.9" fill="#f4f4f4" stroke="#444" stroke-width=".6"/></svg>
<svg style="left:34px;top:213px" width="20" height="20" viewBox="0 0 20 20"><path d="M2 16 Q4 2 9 10 Q14 18 17 4" fill="none" stroke="#3a7ad8" stroke-width="1.6"/><path d="M4 18 L15 3 L18 6 L7 19z" fill="#e0a040" stroke="#7a5020" stroke-width=".6"/></svg>
<svg style="left:22px;top:212px" width="6" height="4" viewBox="0 0 6 4"><path d="M0 0h6l-3 4z" fill="#000"/></svg>
<svg style="left:49px;top:212px" width="6" height="4" viewBox="0 0 6 4"><path d="M0 0h6l-3 4z" fill="#000"/></svg>
<svg style="left:8px;top:239px" width="20" height="20" viewBox="0 0 20 20"><rect x="1" y="2" width="10" height="2.5" fill="#8fb0e8"/><rect x="1" y="5" width="10" height="2.5" fill="#c8d4ec"/><ellipse cx="9" cy="14" rx="7" ry="4.5" fill="#b89070"/><circle cx="6" cy="14" r="1.5" fill="#2255ee"/><circle cx="9" cy="15.5" r="1.5" fill="#22bb22"/><circle cx="12" cy="13" r="1.5" fill="#dd2222"/><path d="M11 11 L18 2" stroke="#a0602a" stroke-width="1.6"/></svg>
<svg style="left:34px;top:239px" width="20" height="20" viewBox="0 0 20 20"><path d="M5 2 L19 2 L15 17 L1 17Z" fill="#4a80e0" stroke="#2a4a90" stroke-width=".8"/><path d="M7 7h10M5 12h10M10 2l-3 15" stroke="#cfe" stroke-width="1"/></svg>
<svg style="left:22px;top:238px" width="6" height="4" viewBox="0 0 6 4"><path d="M0 0h6l-3 4z" fill="#000"/></svg>
<svg style="left:49px;top:238px" width="6" height="4" viewBox="0 0 6 4"><path d="M0 0h6l-3 4z" fill="#000"/></svg>
<svg style="left:8px;top:265px" width="20" height="20" viewBox="0 0 20 20"><path d="M3 9 A7 7 0 0 1 16 6 L18 3 L18 10 L11 10 L14 7.5 A4.5 4.5 0 0 0 6 9Z" fill="#5a8ad8"/><path d="M17 11 A7 7 0 0 1 4 14 L2 17 L2 10 L9 10 L6 12.5 A4.5 4.5 0 0 0 14 11Z" fill="#9ab8ea"/></svg>
<svg style="left:34px;top:265px" width="20" height="20" viewBox="0 0 20 20"><path d="M2 6 L10 2 L18 6 V15 L10 19 L2 15Z" fill="#8a8a8a" stroke="#333" stroke-width=".8"/><path d="M2 6 L10 10 L18 6 L10 2Z" fill="#c8c8c8"/><path d="M10 10V19" stroke="#333" stroke-width=".6"/></svg>
<svg style="left:22px;top:264px" width="6" height="4" viewBox="0 0 6 4"><path d="M0 0h6l-3 4z" fill="#000"/></svg>
<svg style="left:49px;top:264px" width="6" height="4" viewBox="0 0 6 4"><path d="M0 0h6l-3 4z" fill="#000"/></svg>
<svg style="left:8px;top:291px" width="20" height="20" viewBox="0 0 20 20"><path d="M6 6 Q6 1 10 1 Q15 1 15 6 Q15 9 11 11 V14" fill="none" stroke="#4a6cc8" stroke-width="2.6"/><circle cx="11" cy="17" r="1.6" fill="#4a6cc8"/><ellipse cx="11" cy="19" rx="6" ry="1.2" fill="#555" opacity=".4"/></svg>
<svg style="left:34px;top:291px" width="20" height="20" viewBox="0 0 20 20"><path d="M2 4 V17 M18 4 V17" stroke="#333" stroke-width="1.2"/><path d="M3 7 H17" stroke="#ddcc00" stroke-width="1.6"/><path d="M3 7l3-2v4zM17 7l-3-2v4z" fill="#000"/></svg>
<svg style="left:22px;top:290px" width="6" height="4" viewBox="0 0 6 4"><path d="M0 0h6l-3 4z" fill="#000"/></svg>
<svg style="left:49px;top:290px" width="6" height="4" viewBox="0 0 6 4"><path d="M0 0h6l-3 4z" fill="#000"/></svg>
<svg style="left:8px;top:317px" width="20" height="20" viewBox="0 0 20 20"><path d="M3 5h14l-2 14H5z" fill="#b8d8e8" stroke="#6a8a9a" stroke-width=".8"/><rect x="2" y="3" width="16" height="2" fill="#7a9aaa"/><path d="M8 1h4v2H8z" fill="#eecc22"/><path d="M7 9l6 6M13 9l-6 6" stroke="#8bbb44" stroke-width="1"/></svg>
<svg style="left:34px;top:317px" width="20" height="20" viewBox="0 0 20 20"><path d="M1 7 L7 1 V4 Q15 4 15 12 Q15 17 10 17 Q13 13 10 10 Q8 9 7 10 V13z" fill="#a8a8a8"/></svg>
<svg style="left:22px;top:316px" width="6" height="4" viewBox="0 0 6 4"><path d="M0 0h6l-3 4z" fill="#000"/></svg>
<svg style="left:49px;top:316px" width="6" height="4" viewBox="0 0 6 4"><path d="M0 0h6l-3 4z" fill="#000"/></svg>
<svg style="left:8px;top:343px" width="20" height="20" viewBox="0 0 20 20"><circle cx="11" cy="10" r="6" fill="none" stroke="#aa6633" stroke-width="1.4"/><path d="M11 2v16M3 10h16M5 4l12 12M17 4L5 16" stroke="#aa6633" stroke-width="1"/><rect x="0" y="2" width="3" height="16" fill="#777"/><path d="M2 14 L14 19 L18 15 L6 11z" fill="#f08020"/></svg>
<svg style="left:34px;top:343px" width="20" height="20" viewBox="0 0 20 20"><path d="M1 5h7l2 2h7l-2 6H2z" fill="#f6d27c" stroke="#b08030" stroke-width=".7"/><path d="M6 6 Q9 1 14 3 L14 7z" fill="#2aa82a"/><rect x="6" y="11" width="13" height="8" fill="#fff" stroke="#333" stroke-width=".8"/></svg>
<svg style="left:22px;top:342px" width="6" height="4" viewBox="0 0 6 4"><path d="M0 0h6l-3 4z" fill="#000"/></svg>
<svg style="left:49px;top:342px" width="6" height="4" viewBox="0 0 6 4"><path d="M0 0h6l-3 4z" fill="#000"/></svg>
<div class="a" style="left:60px;top:109px;width:1860px;height:892px;background:linear-gradient(180deg,#000016 0%,#47648c 100%)"></div>
<div class="a" style="left:64px;top:113px;width:24px;height:24px;background:#7e8294;"></div>
<svg style="left:66px;top:115px" width="20" height="20" viewBox="0 0 20 20"><rect x="2" y="3" width="16" height="3" fill="#4a5f8a"/><rect x="2" y="9" width="16" height="3" fill="#4a5f8a"/><rect x="2" y="15" width="16" height="3" fill="#4a5f8a"/></svg>
<div class="a" style="left:92px;top:113px;width:24px;height:24px;background:#7e8294;"></div>
<svg style="left:94px;top:115px" width="20" height="20" viewBox="0 0 20 20"><rect x="4" y="5" width="12" height="10" fill="#e8eefc"/><path d="M0 1h4v4H0zM16 1h4v4h-4zM0 15h4v4H0zM16 15h4v4h-4z" fill="#33bb33"/></svg>
<div class="a" style="left:120px;top:113px;width:24px;height:24px;background:#7e8294;"></div>
<svg style="left:122px;top:115px" width="20" height="20" viewBox="0 0 20 20"><circle cx="11" cy="9" r="5.5" fill="#c4d8f0" stroke="#ccd" stroke-width="1.2"/><path d="M7 13 L3 18" stroke="#ccc" stroke-width="2.4"/><path d="M2 4 Q4 2 6 4 M2 8h3" stroke="#ccd" stroke-width="1"/></svg>
<div class="a" style="left:148px;top:113px;width:24px;height:24px;background:#7e8294;"></div>
<svg style="left:150px;top:115px" width="20" height="20" viewBox="0 0 20 20"><path d="M2 12 L10 7 L19 11 L11 17Z" fill="none" stroke="#666" stroke-width=".6"/><path d="M10 12 V2" stroke="#2266ee" stroke-width="1.6"/><path d="M10 12 L16 7" stroke="#33bb33" stroke-width="1.4"/><path d="M10 12 L16 18" stroke="#dd2222" stroke-width="1.6"/><circle cx="10" cy="12" r="1.4" fill="#eee"/></svg>
<div class="a" style="left:176px;top:113px;width:24px;height:24px;background:#7e8294;"></div>
<svg style="left:178px;top:115px" width="20" height="20" viewBox="0 0 20 20"><path d="M10 10 L10 1 M10 10 L1 15 M10 10 L19 15 M10 10 L1 5.5 M10 10 L19 5.5 M10 10 L10 19.5" stroke="#000" stroke-width="1"/><path d="M10 1 L19 5.5 L10 10 L1 5.5Z" fill="#3fcf2a" stroke="#000" stroke-width="1"/><path d="M10 1 L19 5.5 L19 15 L10 19.5 L1 15 L1 5.5Z" fill="none" stroke="#000" stroke-width="1.4"/></svg>
<div class="a" style="left:204px;top:113px;width:24px;height:24px;background:#7e8294;"></div>
<svg style="left:206px;top:115px" width="20" height="20" viewBox="0 0 20 20"><path d="M10 10 L10 1 M10 10 L1 15 M10 10 L19 15 M10 10 L1 5.5 M10 10 L19 5.5 M10 10 L10 19.5" stroke="#000" stroke-width="1"/><path d="M1 15 L10 10 L19 15 L10 19.5Z" fill="#3fcf2a" stroke="#000" stroke-width="1"/><path d="M10 1 L19 5.5 L19 15 L10 19.5 L1 15 L1 5.5Z" fill="none" stroke="#000" stroke-width="1.4"/></svg>
<div class="a" style="left:232px;top:113px;width:24px;height:24px;background:#7e8294;"></div>
<svg style="left:234px;top:115px" width="20" height="20" viewBox="0 0 20 20"><path d="M10 10 L10 1 M10 10 L1 15 M10 10 L19 15 M10 10 L1 5.5 M10 10 L19 5.5 M10 10 L10 19.5" stroke="#000" stroke-width="1"/><path d="M1 5.5 L10 1 L10 10 L1 15Z" fill="#3fcf2a" stroke="#000" stroke-width="1"/><path d="M10 1 L19 5.5 L19 15 L10 19.5 L1 15 L1 5.5Z" fill="none" stroke="#000" stroke-width="1.4"/></svg>
<div class="a" style="left:260px;top:113px;width:24px;height:24px;background:#7e8294;"></div>
<svg style="left:262px;top:115px" width="20" height="20" viewBox="0 0 20 20"><path d="M10 10 L10 1 M10 10 L1 15 M10 10 L19 15 M10 10 L1 5.5 M10 10 L19 5.5 M10 10 L10 19.5" stroke="#000" stroke-width="1"/><path d="M10 10 L19 5.5 L19 15 L10 19.5Z" fill="#3fcf2a" stroke="#000" stroke-width="1"/><path d="M10 1 L19 5.5 L19 15 L10 19.5 L1 15 L1 5.5Z" fill="none" stroke="#000" stroke-width="1.4"/></svg>
<div class="a" style="left:288px;top:113px;width:24px;height:24px;background:#7e8294;"></div>
<svg style="left:290px;top:115px" width="20" height="20" viewBox="0 0 20 20"><path d="M10 10 L10 1 M10 10 L1 15 M10 10 L19 15 M10 10 L1 5.5 M10 10 L19 5.5 M10 10 L10 19.5" stroke="#000" stroke-width="1"/><path d="M1 5.5 L10 10 L10 19.5 L1 15Z" fill="#3fcf2a" stroke="#000" stroke-width="1"/><path d="M10 1 L19 5.5 L19 15 L10 19.5 L1 15 L1 5.5Z" fill="none" stroke="#000" stroke-width="1.4"/></svg>
<div class="a" style="left:316px;top:113px;width:24px;height:24px;background:#7e8294;"></div>
<svg style="left:318px;top:115px" width="20" height="20" viewBox="0 0 20 20"><path d="M10 10 L10 1 M10 10 L1 15 M10 10 L19 15 M10 10 L1 5.5 M10 10 L19 5.5 M10 10 L10 19.5" stroke="#000" stroke-width="1"/><path d="M10 1 L19 5.5 L19 15 L10 10Z" fill="#3fcf2a" stroke="#000" stroke-width="1"/><path d="M10 1 L19 5.5 L19 15 L10 19.5 L1 15 L1 5.5Z" fill="none" stroke="#000" stroke-width="1.4"/></svg>
<div class="a" style="left:344px;top:113px;width:24px;height:24px;background:#7e8294;"></div>
<svg style="left:346px;top:115px" width="20" height="20" viewBox="0 0 20 20"><path d="M1 5.5 L10 10 L10 19.5 L1 15Z" fill="#3fc82a"/><path d="M10 1 L19 5.5 L10 10 L1 5.5Z" fill="#6fe050"/><path d="M10 10 L19 5.5 V15 L10 19.5Z" fill="#2fb020"/><path d="M10 1 L19 5.5 L19 15 L10 19.5 L1 15 L1 5.5Z M1 5.5 L10 10 L19 5.5 M10 10 V19.5" fill="none" stroke="#1a8a1a" stroke-width=".8"/></svg>
<div class="a" style="left:64px;top:141px;width:24px;height:24px;background:#7e8294;"></div>
<svg style="left:66px;top:143px" width="20" height="20" viewBox="0 0 20 20"><g transform="translate(3 1) scale(.7 .9)"><path d="M4 4v11a6 2.4 0 0 0 12 0V4" fill="none" stroke="#222" stroke-width="1.2"/><ellipse cx="10" cy="4" rx="6" ry="2.4" fill="none" stroke="#222" stroke-width="1.2"/></g></svg>
<div class="a" style="left:64px;top:169px;width:24px;height:24px;background:#7e8294;"></div>
<svg style="left:66px;top:171px" width="20" height="20" viewBox="0 0 20 20"><g transform="translate(3 1) scale(.7 .9)"><path d="M4 4v11a6 2.4 0 0 0 12 0V4" fill="none" stroke="#222" stroke-width="1.2"/><ellipse cx="10" cy="4" rx="6" ry="2.4" fill="none" stroke="#222" stroke-width="1.2"/></g></svg>
<div class="a" style="left:64px;top:197px;width:24px;height:24px;background:#8a8870;border:1px solid #e8c860"></div>
<svg style="left:66px;top:199px" width="20" height="20" viewBox="0 0 20 20"><g transform="translate(3 1) scale(.7 .9)"><path d="M4 4v11a6 2.4 0 0 0 12 0V4" fill="#4a70b8" stroke="#222" stroke-width="1.2"/><ellipse cx="10" cy="4" rx="6" ry="2.4" fill="#8ab0f0" stroke="#222" stroke-width="1.2"/></g></svg>
<div class="a" style="left:64px;top:225px;width:24px;height:24px;background:#7e8294;"></div>
<svg style="left:66px;top:227px" width="20" height="20" viewBox="0 0 20 20"><g transform="translate(3 1) scale(.7 .9)"><path d="M4 4v11a6 2.4 0 0 0 12 0V4" fill="#dde4f6" stroke="#222" stroke-width="1.2"/><ellipse cx="10" cy="4" rx="6" ry="2.4" fill="#f0f4ff" stroke="#222" stroke-width="1.2"/></g></svg>
<div class="a" style="left:64px;top:253px;width:24px;height:24px;background:#7e8294;"></div>
<svg style="left:66px;top:255px" width="20" height="20" viewBox="0 0 20 20"><g transform="translate(3 1) scale(.7 .9)"><path d="M4 4v11a6 2.4 0 0 0 12 0V4" fill="#aaa" stroke="#222" stroke-width="1.2"/><ellipse cx="10" cy="4" rx="6" ry="2.4" fill="#ccc" stroke="#222" stroke-width="1.2"/></g><path d="M7 5 L10 15 M10 5 L8 12 M13 5 L13 15" stroke="#333" stroke-width=".7"/></svg>
<svg style="left:55px;top:875px" width="100" height="80" viewBox="55 875 100 80"><rect x="99.5" y="916.5" width="20" height="25" fill="#8090b0" fill-opacity=".45" stroke="#d0d0d0" stroke-width="1"/><rect x="120" y="917" width="16" height="25" fill="#7a8a5a" stroke="#f0f000" stroke-width="1"/><path d="M70 942 H120" stroke="#0aa0b0" stroke-width="2.4"/><path d="M60 942 L70 937 L70 947Z" fill="#20e0ee"/><path d="M120 942 V900" stroke="#22dd22" stroke-width="2.4"/><path d="M120 891 L115.5 903 L124.5 903Z" fill="#33ee33"/><path d="M120 942 H132" stroke="#ee2222" stroke-width="2.4"/><path d="M141 942 L132 937.5 L132 946.5Z" fill="#ee1111"/><circle cx="120" cy="942" r="2.6" fill="#777"/><path d="M116 881 L119.5 885 L123 881 M119.5 885 V889" stroke="#ddd" stroke-width="1" fill="none"/><path d="M141 939 L149 948 M149 939 L141 948" stroke="#ddd" stroke-width="1"/></svg>
<svg style="left:840px;top:105px" width="500" height="585" viewBox="840 105 500 585"><rect x="870" y="109" width="120" height="520" fill="#8c4600"/><rect x="1005" y="109" width="167" height="395" fill="#8c4600"/><rect x="867" y="500" width="120" height="128" fill="#8c4600"/><rect x="985" y="499" width="68" height="130" fill="#f07c00"/><rect x="1001" y="500" width="52" height="130" fill="#8c4600" opacity="0"/><rect x="1068" y="502" width="106" height="134" fill="#8c4600"/><path d="M1068 580.5 H1174" stroke="#000" stroke-width="1.2"/><rect x="1156" y="502" width="17" height="78" fill="#f07c00"/><ellipse cx="1150" cy="606" rx="11" ry="14" fill="#f07c00" stroke="#000" stroke-width="1"/><rect x="1183" y="502" width="14" height="132" fill="#8c4600"/><rect x="1197" y="502" width="33" height="131" fill="#f07c00" stroke="#000" stroke-width="1"/><rect x="1204" y="549" width="4" height="34" rx="2" fill="#1a2a50" stroke="#000" stroke-width=".6"/><rect x="870" y="265" width="6" height="32" fill="#1a2a50" stroke="#000" stroke-width=".6"/><rect x="855" y="109" width="17" height="533" fill="#000"/><rect x="856.6" y="178" width="1.2" height="26" fill="#a0a0a0"/><rect x="856.9" y="206" width="1.2" height="84" fill="#ffffff"/><rect x="856.6" y="293" width="1.2" height="50" fill="#d0d0d0"/><rect x="857.4" y="346" width="1.2" height="48" fill="#a0a0a0"/><rect x="857.0" y="430" width="1.2" height="37" fill="#ffffff"/><rect x="857.1" y="473" width="1.2" height="43" fill="#a0a0a0"/><rect x="857.1" y="523" width="1.2" height="32" fill="#ffffff"/><rect x="857.3" y="560" width="1.2" height="82" fill="#d0d0d0"/><rect x="861.6" y="109" width="1.2" height="78" fill="#ffffff"/><rect x="861.3" y="192" width="1.2" height="30" fill="#a0a0a0"/><rect x="861.0" y="229" width="1.2" height="77" fill="#ffffff"/><rect x="860.9" y="359" width="1.2" height="82" fill="#a0a0a0"/><rect x="861.4" y="451" width="1.2" height="60" fill="#d0d0d0"/><rect x="860.9" y="554" width="1.2" height="80" fill="#ffffff"/><rect x="866.1" y="109" width="1.2" height="77" fill="#d0d0d0"/><rect x="865.2" y="222" width="1.2" height="41" fill="#d0d0d0"/><rect x="865.6" y="269" width="1.2" height="36" fill="#d0d0d0"/><rect x="865.7" y="314" width="1.2" height="30" fill="#d0d0d0"/><rect x="865.3" y="510" width="1.2" height="49" fill="#ffffff"/><rect x="865.3" y="564" width="1.2" height="21" fill="#a0a0a0"/><rect x="865.5" y="591" width="1.2" height="20" fill="#a0a0a0"/><rect x="866.1" y="618" width="1.2" height="24" fill="#a0a0a0"/><rect x="869.6" y="197" width="1.2" height="70" fill="#d0d0d0"/><rect x="869.9" y="275" width="1.2" height="27" fill="#ffffff"/><rect x="869.5" y="305" width="1.2" height="63" fill="#ffffff"/><rect x="870.1" y="372" width="1.2" height="88" fill="#d0d0d0"/><rect x="870.1" y="463" width="1.2" height="46" fill="#ffffff"/><rect x="870.3" y="516" width="1.2" height="66" fill="#ffffff"/><rect x="869.6" y="591" width="1.2" height="51" fill="#ffffff"/><rect x="988" y="109" width="17" height="391" fill="#000"/><rect x="989.7" y="109" width="1.2" height="53" fill="#a0a0a0"/><rect x="990.4" y="220" width="1.2" height="66" fill="#a0a0a0"/><rect x="989.9" y="357" width="1.2" height="53" fill="#ffffff"/><rect x="989.8" y="415" width="1.2" height="85" fill="#a0a0a0"/><rect x="994.2" y="161" width="1.2" height="49" fill="#d0d0d0"/><rect x="994.8" y="244" width="1.2" height="53" fill="#a0a0a0"/><rect x="994.3" y="377" width="1.2" height="30" fill="#ffffff"/><rect x="994.7" y="414" width="1.2" height="46" fill="#a0a0a0"/><rect x="998.6" y="238" width="1.2" height="62" fill="#a0a0a0"/><rect x="999.2" y="308" width="1.2" height="30" fill="#ffffff"/><rect x="999.0" y="340" width="1.2" height="39" fill="#d0d0d0"/><rect x="998.3" y="383" width="1.2" height="80" fill="#d0d0d0"/><rect x="998.8" y="473" width="1.2" height="27" fill="#a0a0a0"/><rect x="1003.3" y="109" width="1.2" height="37" fill="#ffffff"/><rect x="1003.0" y="151" width="1.2" height="23" fill="#d0d0d0"/><rect x="1002.6" y="181" width="1.2" height="53" fill="#ffffff"/><rect x="1002.9" y="241" width="1.2" height="78" fill="#a0a0a0"/><rect x="1003.0" y="329" width="1.2" height="36" fill="#a0a0a0"/><rect x="1002.7" y="374" width="1.2" height="43" fill="#ffffff"/><rect x="1003.2" y="426" width="1.2" height="35" fill="#d0d0d0"/><rect x="1171" y="109" width="10" height="391" fill="#000"/><rect x="1172.5" y="109" width="1.2" height="27" fill="#d0d0d0"/><rect x="1173.3" y="139" width="1.2" height="84" fill="#ffffff"/><rect x="1173.1" y="226" width="1.2" height="76" fill="#a0a0a0"/><rect x="1173.3" y="307" width="1.2" height="55" fill="#a0a0a0"/><rect x="1173.4" y="372" width="1.2" height="51" fill="#d0d0d0"/><rect x="1172.9" y="428" width="1.2" height="72" fill="#ffffff"/><rect x="1178.6" y="109" width="1.2" height="29" fill="#d0d0d0"/><rect x="1179.5" y="183" width="1.2" height="66" fill="#ffffff"/><rect x="1178.7" y="254" width="1.2" height="32" fill="#d0d0d0"/><rect x="1178.9" y="291" width="1.2" height="40" fill="#a0a0a0"/><rect x="1179.2" y="339" width="1.2" height="45" fill="#ffffff"/><rect x="1179.2" y="386" width="1.2" height="63" fill="#d0d0d0"/><rect x="1179.0" y="457" width="1.2" height="43" fill="#d0d0d0"/><rect x="1053" y="290" width="17" height="362" fill="#000"/><rect x="1054.5" y="329" width="1.2" height="33" fill="#d0d0d0"/><rect x="1055.4" y="428" width="1.2" height="53" fill="#a0a0a0"/><rect x="1055.3" y="490" width="1.2" height="61" fill="#ffffff"/><rect x="1054.6" y="635" width="1.2" height="17" fill="#d0d0d0"/><rect x="1059.3" y="290" width="1.2" height="28" fill="#ffffff"/><rect x="1059.5" y="325" width="1.2" height="90" fill="#d0d0d0"/><rect x="1059.8" y="417" width="1.2" height="87" fill="#ffffff"/><rect x="1059.5" y="510" width="1.2" height="26" fill="#d0d0d0"/><rect x="1059.5" y="546" width="1.2" height="46" fill="#a0a0a0"/><rect x="1063.7" y="290" width="1.2" height="24" fill="#a0a0a0"/><rect x="1063.3" y="319" width="1.2" height="85" fill="#d0d0d0"/><rect x="1064.1" y="412" width="1.2" height="83" fill="#d0d0d0"/><rect x="1068.2" y="290" width="1.2" height="36" fill="#a0a0a0"/><rect x="1068.2" y="332" width="1.2" height="75" fill="#ffffff"/><rect x="1068.1" y="415" width="1.2" height="84" fill="#d0d0d0"/><rect x="1067.8" y="505" width="1.2" height="25" fill="#ffffff"/><rect x="1068.5" y="532" width="1.2" height="53" fill="#d0d0d0"/><rect x="1067.7" y="595" width="1.2" height="57" fill="#d0d0d0"/><rect x="1230" y="290" width="15" height="360" fill="#000"/><rect x="1232.0" y="290" width="1.2" height="20" fill="#ffffff"/><rect x="1231.6" y="320" width="1.2" height="45" fill="#ffffff"/><rect x="1231.9" y="368" width="1.2" height="38" fill="#ffffff"/><rect x="1232.1" y="412" width="1.2" height="58" fill="#ffffff"/><rect x="1232.3" y="480" width="1.2" height="39" fill="#a0a0a0"/><rect x="1231.6" y="527" width="1.2" height="61" fill="#d0d0d0"/><rect x="1231.6" y="627" width="1.2" height="23" fill="#a0a0a0"/><rect x="1237.8" y="290" width="1.2" height="84" fill="#ffffff"/><rect x="1237.6" y="379" width="1.2" height="30" fill="#ffffff"/><rect x="1237.5" y="490" width="1.2" height="26" fill="#a0a0a0"/><rect x="1237.8" y="521" width="1.2" height="82" fill="#d0d0d0"/><rect x="1237.1" y="613" width="1.2" height="37" fill="#a0a0a0"/><rect x="1242.7" y="348" width="1.2" height="50" fill="#ffffff"/><rect x="1242.7" y="580" width="1.2" height="25" fill="#a0a0a0"/><rect x="1243.2" y="609" width="1.2" height="41" fill="#a0a0a0"/><rect x="1174" y="502" width="9" height="134" fill="#000"/><rect x="1175.8" y="502" width="1.2" height="21" fill="#d0d0d0"/><rect x="1176.2" y="526" width="1.2" height="47" fill="#d0d0d0"/><rect x="1176.5" y="579" width="1.2" height="57" fill="#ffffff"/><rect x="1181.4" y="502" width="1.2" height="45" fill="#ffffff"/><rect x="1181.5" y="549" width="1.2" height="57" fill="#a0a0a0"/><rect x="1180.6" y="615" width="1.2" height="21" fill="#ffffff"/><rect x="995" y="289" width="60" height="13" fill="#000"/><rect x="996" y="290.9" width="24" height="1.5" fill="#e8e8e8"/><rect x="1021" y="290.8" width="33" height="1.5" fill="#e8e8e8"/><rect x="996" y="293.6" width="29" height="1.5" fill="#bdbdbd"/><rect x="1028" y="293.0" width="26" height="1.5" fill="#ffffff"/><rect x="996" y="295.9" width="58" height="1.5" fill="#bdbdbd"/><rect x="996" y="298.7" width="41" height="1.5" fill="#e8e8e8"/><rect x="1037" y="298.4" width="17" height="1.5" fill="#e8e8e8"/><rect x="1069" y="289" width="177" height="13" fill="#000"/><rect x="1070" y="290.6" width="175" height="1.7" fill="#a4a4a4"/><rect x="1070" y="294.2" width="175" height="1.7" fill="#a4a4a4"/><rect x="1070" y="297.8" width="175" height="1.7" fill="#a4a4a4"/><rect x="1159" y="289" width="40" height="1.2" fill="#f07c00"/><rect x="995" y="334" width="60" height="13" fill="#000"/><rect x="996" y="335.2" width="58" height="1.5" fill="#bdbdbd"/><rect x="996" y="338.6" width="58" height="1.5" fill="#ffffff"/><rect x="996" y="340.7" width="31" height="1.5" fill="#e8e8e8"/><rect x="1030" y="340.9" width="24" height="1.5" fill="#ffffff"/><rect x="996" y="344.0" width="58" height="1.5" fill="#e8e8e8"/><rect x="1069" y="334" width="177" height="13" fill="#000"/><rect x="1070" y="335.6" width="175" height="1.7" fill="#a4a4a4"/><rect x="1070" y="339.2" width="175" height="1.7" fill="#a4a4a4"/><rect x="1070" y="342.8" width="175" height="1.7" fill="#a4a4a4"/><rect x="1159" y="334" width="40" height="1.2" fill="#f07c00"/><rect x="995" y="381" width="60" height="13" fill="#000"/><rect x="996" y="382.8" width="21" height="1.5" fill="#ffffff"/><rect x="1019" y="382.3" width="35" height="1.5" fill="#ffffff"/><rect x="996" y="385.0" width="42" height="1.5" fill="#e8e8e8"/><rect x="1040" y="385.6" width="14" height="1.5" fill="#bdbdbd"/><rect x="996" y="388.2" width="50" height="1.5" fill="#ffffff"/><rect x="1046" y="388.0" width="8" height="1.5" fill="#bdbdbd"/><rect x="996" y="390.7" width="56" height="1.5" fill="#e8e8e8"/><rect x="1069" y="381" width="177" height="13" fill="#000"/><rect x="1070" y="382.6" width="175" height="1.7" fill="#a4a4a4"/><rect x="1070" y="386.2" width="175" height="1.7" fill="#a4a4a4"/><rect x="1070" y="389.8" width="175" height="1.7" fill="#a4a4a4"/><rect x="1159" y="381" width="40" height="1.2" fill="#f07c00"/><rect x="995" y="427" width="60" height="13" fill="#000"/><rect x="996" y="428.5" width="23" height="1.5" fill="#ffffff"/><rect x="1021" y="428.3" width="33" height="1.5" fill="#e8e8e8"/><rect x="996" y="431.1" width="40" height="1.5" fill="#ffffff"/><rect x="1040" y="430.9" width="14" height="1.5" fill="#bdbdbd"/><rect x="996" y="434.0" width="19" height="1.5" fill="#ffffff"/><rect x="1018" y="434.0" width="36" height="1.5" fill="#ffffff"/><rect x="996" y="436.7" width="58" height="1.5" fill="#bdbdbd"/><rect x="1069" y="427" width="177" height="13" fill="#000"/><rect x="1070" y="428.6" width="175" height="1.7" fill="#a4a4a4"/><rect x="1070" y="432.2" width="175" height="1.7" fill="#a4a4a4"/><rect x="1070" y="435.8" width="175" height="1.7" fill="#a4a4a4"/><rect x="1159" y="427" width="40" height="1.2" fill="#f07c00"/><rect x="1069" y="474" width="177" height="13" fill="#000"/><rect x="1070" y="475.6" width="175" height="1.7" fill="#a4a4a4"/><rect x="1070" y="479.2" width="175" height="1.7" fill="#a4a4a4"/><rect x="1070" y="482.8" width="175" height="1.7" fill="#a4a4a4"/><rect x="995" y="474" width="60" height="13" fill="#000"/><rect x="996" y="475.6" width="58" height="1.7" fill="#a4a4a4"/><rect x="996" y="479.2" width="58" height="1.7" fill="#a4a4a4"/><rect x="996" y="482.8" width="58" height="1.7" fill="#a4a4a4"/><rect x="1069" y="490" width="177" height="12" fill="#000"/><rect x="1070" y="491.4" width="175" height="1.7" fill="#a4a4a4"/><rect x="1070" y="494.8" width="175" height="1.7" fill="#a4a4a4"/><rect x="1070" y="498.2" width="175" height="1.7" fill="#a4a4a4"/><rect x="860" y="369" width="129" height="16" fill="#000"/><rect x="861" y="370.2" width="27" height="1.5" fill="#ffffff"/><rect x="890" y="370.4" width="50" height="1.5" fill="#ffffff"/><rect x="942" y="370.8" width="31" height="1.5" fill="#ffffff"/><rect x="976" y="370.7" width="12" height="1.5" fill="#bdbdbd"/><rect x="861" y="373.2" width="39" height="1.5" fill="#e8e8e8"/><rect x="900" y="373.4" width="46" height="1.5" fill="#e8e8e8"/><rect x="948" y="373.0" width="23" height="1.5" fill="#ffffff"/><rect x="972" y="373.4" width="16" height="1.5" fill="#bdbdbd"/><rect x="861" y="375.8" width="34" height="1.5" fill="#ffffff"/><rect x="898" y="376.5" width="60" height="1.5" fill="#bdbdbd"/><rect x="961" y="376.0" width="15" height="1.5" fill="#ffffff"/><rect x="980" y="376.5" width="8" height="1.5" fill="#bdbdbd"/><rect x="861" y="378.7" width="65" height="1.5" fill="#ffffff"/><rect x="927" y="379.3" width="48" height="1.5" fill="#ffffff"/><rect x="978" y="378.5" width="10" height="1.5" fill="#ffffff"/><rect x="861" y="381.8" width="29" height="1.5" fill="#ffffff"/><rect x="892" y="381.7" width="23" height="1.5" fill="#e8e8e8"/><rect x="918" y="381.4" width="59" height="1.5" fill="#ffffff"/><rect x="979" y="381.6" width="9" height="1.5" fill="#ffffff"/><rect x="855" y="480" width="200" height="20" fill="#000"/><rect x="856" y="481.1" width="65" height="1.5" fill="#ffffff"/><rect x="923" y="481.9" width="44" height="1.5" fill="#e8e8e8"/><rect x="968" y="481.5" width="45" height="1.5" fill="#ffffff"/><rect x="1013" y="481.1" width="41" height="1.5" fill="#e8e8e8"/><rect x="856" y="484.2" width="46" height="1.5" fill="#bdbdbd"/><rect x="903" y="484.8" width="57" height="1.5" fill="#bdbdbd"/><rect x="961" y="484.7" width="46" height="1.5" fill="#ffffff"/><rect x="1010" y="484.3" width="38" height="1.5" fill="#bdbdbd"/><rect x="1050" y="484.3" width="4" height="1.5" fill="#ffffff"/><rect x="856" y="487.3" width="34" height="1.5" fill="#ffffff"/><rect x="891" y="487.2" width="31" height="1.5" fill="#e8e8e8"/><rect x="926" y="487.8" width="46" height="1.5" fill="#ffffff"/><rect x="975" y="487.9" width="41" height="1.5" fill="#ffffff"/><rect x="1017" y="487.3" width="37" height="1.5" fill="#ffffff"/><rect x="856" y="490.1" width="24" height="1.5" fill="#bdbdbd"/><rect x="880" y="490.5" width="26" height="1.5" fill="#bdbdbd"/><rect x="908" y="490.9" width="61" height="1.5" fill="#ffffff"/><rect x="970" y="490.2" width="36" height="1.5" fill="#ffffff"/><rect x="1010" y="490.1" width="44" height="1.5" fill="#bdbdbd"/><rect x="856" y="493.9" width="68" height="1.5" fill="#e8e8e8"/><rect x="927" y="493.1" width="25" height="1.5" fill="#ffffff"/><rect x="954" y="493.4" width="20" height="1.5" fill="#e8e8e8"/><rect x="974" y="493.4" width="50" height="1.5" fill="#ffffff"/><rect x="1026" y="493.2" width="28" height="1.5" fill="#bdbdbd"/><rect x="856" y="496.5" width="27" height="1.5" fill="#e8e8e8"/><rect x="886" y="496.4" width="27" height="1.5" fill="#e8e8e8"/><rect x="916" y="496.3" width="16" height="1.5" fill="#bdbdbd"/><rect x="935" y="496.1" width="17" height="1.5" fill="#bdbdbd"/><rect x="952" y="496.3" width="66" height="1.5" fill="#ffffff"/><rect x="1018" y="496.4" width="36" height="1.5" fill="#e8e8e8"/><path d="M855 489 L1246 490" stroke="#e8e000" stroke-width="1"/><rect x="852" y="628" width="203" height="17" fill="#000"/><rect x="853" y="629.3" width="54" height="1.5" fill="#ffffff"/><rect x="909" y="629.1" width="32" height="1.5" fill="#e8e8e8"/><rect x="945" y="629.1" width="66" height="1.5" fill="#ffffff"/><rect x="1012" y="629.7" width="21" height="1.5" fill="#bdbdbd"/><rect x="1036" y="629.7" width="18" height="1.5" fill="#bdbdbd"/><rect x="853" y="632.2" width="67" height="1.5" fill="#bdbdbd"/><rect x="923" y="632.7" width="26" height="1.5" fill="#ffffff"/><rect x="951" y="632.6" width="67" height="1.5" fill="#ffffff"/><rect x="1020" y="632.5" width="34" height="1.5" fill="#e8e8e8"/><rect x="853" y="635.4" width="20" height="1.5" fill="#ffffff"/><rect x="874" y="635.2" width="30" height="1.5" fill="#bdbdbd"/><rect x="904" y="635.2" width="45" height="1.5" fill="#e8e8e8"/><rect x="952" y="635.3" width="21" height="1.5" fill="#ffffff"/><rect x="973" y="635.4" width="28" height="1.5" fill="#ffffff"/><rect x="1004" y="635.2" width="26" height="1.5" fill="#ffffff"/><rect x="1033" y="635.7" width="21" height="1.5" fill="#ffffff"/><rect x="853" y="638.3" width="64" height="1.5" fill="#e8e8e8"/><rect x="921" y="638.3" width="32" height="1.5" fill="#e8e8e8"/><rect x="955" y="638.3" width="27" height="1.5" fill="#bdbdbd"/><rect x="983" y="638.3" width="30" height="1.5" fill="#ffffff"/><rect x="1017" y="638.2" width="27" height="1.5" fill="#e8e8e8"/><rect x="1046" y="638.6" width="8" height="1.5" fill="#ffffff"/><rect x="853" y="641.9" width="56" height="1.5" fill="#bdbdbd"/><rect x="909" y="641.8" width="15" height="1.5" fill="#bdbdbd"/><rect x="925" y="641.8" width="68" height="1.5" fill="#bdbdbd"/><rect x="993" y="641.2" width="33" height="1.5" fill="#ffffff"/><rect x="1027" y="641.8" width="27" height="1.5" fill="#ffffff"/><rect x="1069" y="632" width="177" height="15" fill="#000"/><rect x="1070" y="633.8" width="175" height="1.7" fill="#a4a4a4"/><rect x="1070" y="638.0" width="175" height="1.7" fill="#a4a4a4"/><rect x="1070" y="642.2" width="175" height="1.7" fill="#a4a4a4"/><rect x="934" y="174" width="55" height="29" fill="#b0b0b0" stroke="#000" stroke-width="1"/><rect x="949" y="174" width="16" height="29" fill="#808080" stroke="#000" stroke-width=".8"/><rect x="983" y="174" width="6" height="29" fill="#777"/><rect x="896" y="167" width="3" height="50" fill="#f0e040"/><rect x="929" y="167" width="3" height="50" fill="#f0e040"/><rect x="887" y="168" width="50" height="10" fill="#c8b020" stroke="#000" stroke-width=".8"/><rect x="888" y="171" width="6" height="5" fill="#20b8c8"/><rect x="918" y="171" width="8" height="5" fill="#20b8c8"/><rect x="906" y="173" width="12" height="10" fill="#a89020" stroke="#000" stroke-width=".6"/><rect x="910" y="180" width="24" height="3" fill="#888"/><rect x="960" y="203" width="4" height="160" fill="#e8e8e8" stroke="#555" stroke-width=".5"/><path d="M888 217 L960 219 L959 318 L887 316Z" fill="#2f8a3a" stroke="#000" stroke-width="1"/><path d="M895 225 L953 227 L952 311 L895 310Z" fill="#eeeeee" stroke="#000" stroke-width="1"/><rect x="960" y="225" width="3" height="95" fill="#999"/><rect x="965" y="257" width="23" height="10" fill="#c8b020" stroke="#000" stroke-width=".6"/><rect x="964" y="260" width="25" height="4" fill="#eee"/><rect x="966" y="268" width="10" height="24" rx="2" fill="#c8c8e0" stroke="#000" stroke-width=".6"/><rect x="964" y="289" width="26" height="5" fill="#aaa"/><rect x="896" y="318" width="3" height="48" fill="#f0e040"/><rect x="929" y="318" width="3" height="48" fill="#f0e040"/><circle cx="912" cy="341" r="3.5" fill="#2a8a3a" stroke="#000" stroke-width=".8"/><circle cx="925" cy="342" r="3.5" fill="#e8e040" stroke="#000" stroke-width=".8"/><circle cx="933" cy="342" r="3.5" fill="#2a8a3a" stroke="#000" stroke-width=".8"/><rect x="886" y="358" width="16" height="10" fill="#999" stroke="#000" stroke-width=".6"/><rect x="906" y="359" width="82" height="10" fill="#999" stroke="#000" stroke-width="1"/><rect x="906" y="356" width="10" height="8" fill="#eee"/><rect x="892" y="385" width="8" height="82" fill="#a8a8a8" stroke="#000" stroke-width=".6"/><rect x="887" y="384" width="18" height="4" fill="#20c8d0"/><rect x="889" y="465" width="14" height="13" fill="#20c0c8" stroke="#000" stroke-width=".6"/><path d="M900 410 Q905 402 912 410 L912 418" fill="none" stroke="#bbb" stroke-width="2.5"/><rect x="904" y="420" width="80" height="5" fill="#e8e8f0" stroke="#000" stroke-width=".8"/><rect x="902" y="429" width="84" height="7" fill="#555" stroke="#000" stroke-width=".8"/><rect x="903" y="430" width="30" height="2" fill="#eee"/><rect x="942" y="427" width="6" height="8" fill="#20d0e0"/><rect x="902" y="436" width="84" height="7" fill="#aaa" stroke="#000" stroke-width=".8"/><rect x="915" y="443" width="10" height="37" fill="#d8d8e8" stroke="#000" stroke-width=".6"/><rect x="925" y="443" width="47" height="37" fill="#888" stroke="#000" stroke-width=".6"/><rect x="932" y="448" width="40" height="18" fill="#8c4600" stroke="#000" stroke-width=".8"/><rect x="970" y="436" width="15" height="38" fill="#eee" stroke="#000" stroke-width=".8"/><circle cx="975" cy="455" r="1" fill="#000"/><circle cx="979" cy="455" r="1" fill="#000"/><circle cx="975" cy="460" r="1" fill="#000"/><circle cx="979" cy="460" r="1" fill="#000"/><rect x="963" y="394" width="25" height="26" fill="#ddd" stroke="#000" stroke-width=".8"/><rect x="966" y="400" width="20" height="6" fill="#555"/><rect x="980" y="395" width="8" height="14" fill="#999"/><rect x="870" y="460" width="18" height="16" fill="#888" stroke="#000" stroke-width=".6"/><rect x="905" y="466" width="80" height="12" fill="#999" stroke="#000" stroke-width=".6"/><rect x="967" y="500" width="18" height="56" fill="#000"/><rect x="978.5" y="500" width="1.2" height="33" fill="#a0a0a0"/><rect x="977.9" y="538" width="1.2" height="18" fill="#ffffff"/><rect x="983.4" y="500" width="1.2" height="24" fill="#a0a0a0"/><rect x="982.7" y="526" width="1.2" height="30" fill="#d0d0d0"/><defs><linearGradient id="wg" x1="0" y1="0" x2="0" y2="1"><stop offset="0" stop-color="#e86a20"/><stop offset="1" stop-color="#f0a020"/></linearGradient></defs><g opacity=".95"><path d="M891 540 V518 L894 520 V539Z M895 539 V512 L899 516 V538Z M899 538 V522 L902 526 V537Z" fill="url(#wg)"/><path d="M936 540 V518 L933 520 V539Z M932 539 V512 L928 516 V538Z M928 538 V522 L925 526 V537Z" fill="url(#wg)"/><path d="M890 539 Q903 536 914 539 L918 539 Q929 536 937 539 L937 541 L890 541Z" fill="#f0a020"/><path d="M914 510 Q902 516 905 526 Q908 520 913 520 Z" fill="#f0b020"/><path d="M913 520 L915 532 Q924 528 922 518 Q920 526 916 526Z" fill="#e87020"/></g><text x="947" y="529" font-size="16" fill="#f09038" opacity=".9" font-family="Liberation Sans, sans-serif" textLength="82" lengthAdjust="spacingAndGlyphs">智造资料网</text><text x="947" y="537.5" font-size="4.5" fill="#f09038" opacity=".85" font-family="Liberation Sans, sans-serif" font-weight="bold" textLength="82" lengthAdjust="spacingAndGlyphs">INTELLIGENT MANUFACTURING DATA</text><rect x="942" y="555" width="92" height="74" fill="#8e8e8e" stroke="#000" stroke-width="1"/><rect x="874" y="553" width="29" height="75" fill="#eeeeee" stroke="#000" stroke-width="1"/><rect x="878" y="557" width="21" height="3" fill="#555"/><rect x="876" y="565" width="25" height="6" fill="#fff" stroke="#000" stroke-width=".8"/><rect x="876" y="573" width="23" height="4" fill="#000"/><rect x="894" y="580" width="5" height="4" fill="#c00"/><path d="M878 582 h12" stroke="#000" stroke-width="2" stroke-dasharray="2 1"/><rect x="878" y="587" width="18" height="5" fill="#000"/><rect x="878" y="595" width="18" height="5" fill="#000"/><rect x="878" y="603" width="18" height="5" fill="#000"/><rect x="878" y="611" width="18" height="5" fill="#000"/><rect x="912" y="553" width="29" height="75" fill="#eeeeee" stroke="#000" stroke-width="1"/><rect x="916" y="557" width="21" height="3" fill="#555"/><rect x="914" y="565" width="25" height="6" fill="#fff" stroke="#000" stroke-width=".8"/><rect x="914" y="573" width="23" height="4" fill="#000"/><rect x="932" y="580" width="5" height="4" fill="#c00"/><path d="M916 582 h12" stroke="#000" stroke-width="2" stroke-dasharray="2 1"/><rect x="916" y="587" width="18" height="5" fill="#000"/><rect x="916" y="595" width="18" height="5" fill="#000"/><rect x="916" y="603" width="18" height="5" fill="#000"/><rect x="916" y="611" width="18" height="5" fill="#000"/><path d="M876 541 H904 M913 542 H942" stroke="#20e0ee" stroke-width="1" fill="none"/><path d="M875 541 V553 M904 541 V555 M912 541 V555 M942 543 V555" stroke="#999" stroke-width=".8" fill="none"/><path d="M895 651 H1027 M895 641 V654 M933 641 V656 M988 641 V654" stroke="#20e0ee" stroke-width=".8" fill="none"/><path d="M868 553 V628" stroke="#20e0ee" stroke-width="1"/><rect x="854" y="513" width="12" height="18" fill="#111" stroke="#000" stroke-width="1.5"/><path d="M856.5 515v14M860 516v12M863.5 515v14" stroke="#ccc" stroke-width="1"/><rect x="854" y="592" width="12" height="18" fill="#111" stroke="#000" stroke-width="1.5"/><path d="M856.5 594v14M860 595v12M863.5 594v14" stroke="#ccc" stroke-width="1"/><rect x="1047" y="514" width="12" height="18" fill="#111" stroke="#000" stroke-width="1.5"/><path d="M1049.5 516v14M1053 517v12M1056.5 516v14" stroke="#ccc" stroke-width="1"/><rect x="1047" y="598" width="12" height="18" fill="#111" stroke="#000" stroke-width="1.5"/><path d="M1049.5 600v14M1053 601v12M1056.5 600v14" stroke="#ccc" stroke-width="1"/><rect x="846" y="645" width="20" height="3" fill="#000"/><rect x="848" y="646" width="16" height="1" fill="#bbb"/><ellipse cx="857" cy="661" rx="8" ry="10.5" fill="#4a4a58" stroke="#000" stroke-width="1.4"/><ellipse cx="855" cy="661" rx="6" ry="8.5" fill="#9a9aae" stroke="#000" stroke-width="1"/><path d="M846 649 H866 L863 658 L859 654 L855 661 L850 658Z" fill="#d8d8ea" stroke="#000" stroke-width="1.2"/><path d="M855 650 V663" stroke="#000" stroke-width="1.6"/><circle cx="856" cy="662" r="1.8" fill="#eee" stroke="#000" stroke-width=".8"/><rect x="1016" y="645" width="20" height="3" fill="#000"/><rect x="1018" y="646" width="16" height="1" fill="#bbb"/><ellipse cx="1027" cy="661" rx="8" ry="10.5" fill="#4a4a58" stroke="#000" stroke-width="1.4"/><ellipse cx="1025" cy="661" rx="6" ry="8.5" fill="#9a9aae" stroke="#000" stroke-width="1"/><path d="M1016 649 H1036 L1033 658 L1029 654 L1025 661 L1020 658Z" fill="#d8d8ea" stroke="#000" stroke-width="1.2"/><path d="M1025 650 V663" stroke="#000" stroke-width="1.6"/><circle cx="1026" cy="662" r="1.8" fill="#eee" stroke="#000" stroke-width=".8"/><rect x="1043" y="651" width="20" height="3" fill="#000"/><rect x="1045" y="652" width="16" height="1" fill="#bbb"/><ellipse cx="1054" cy="667" rx="8" ry="10.5" fill="#4a4a58" stroke="#000" stroke-width="1.4"/><ellipse cx="1052" cy="667" rx="6" ry="8.5" fill="#9a9aae" stroke="#000" stroke-width="1"/><path d="M1043 655 H1063 L1060 664 L1056 660 L1052 667 L1047 664Z" fill="#d8d8ea" stroke="#000" stroke-width="1.2"/><path d="M1052 656 V669" stroke="#000" stroke-width="1.6"/><circle cx="1053" cy="668" r="1.8" fill="#eee" stroke="#000" stroke-width=".8"/><rect x="1217" y="650" width="20" height="3" fill="#000"/><rect x="1219" y="651" width="16" height="1" fill="#bbb"/><ellipse cx="1228" cy="666" rx="8" ry="10.5" fill="#4a4a58" stroke="#000" stroke-width="1.4"/><ellipse cx="1226" cy="666" rx="6" ry="8.5" fill="#9a9aae" stroke="#000" stroke-width="1"/><path d="M1217 654 H1237 L1234 663 L1230 659 L1226 666 L1221 663Z" fill="#d8d8ea" stroke="#000" stroke-width="1.2"/><path d="M1226 655 V668" stroke="#000" stroke-width="1.6"/><circle cx="1227" cy="667" r="1.8" fill="#eee" stroke="#000" stroke-width=".8"/><path d="M1243 643 H1292" stroke="#0aa0b0" stroke-width="2"/><path d="M1238 643 L1246 639 L1246 647Z" fill="#20e0ee"/><path d="M1295 643 V604" stroke="#22bb22" stroke-width="2"/><path d="M1295 595 L1291 606 L1299 606Z" fill="#33dd33"/><path d="M1295 643 H1307" stroke="#dd2222" stroke-width="2"/><path d="M1315 643 L1306 639 L1306 647Z" fill="#ee1111"/><circle cx="1295" cy="643" r="2.5" fill="#888"/><path d="M1292 633 h-4 v22 h4 M1299 633 h4 v22 h-4" stroke="#ccc" stroke-width="1" fill="none" stroke-dasharray="4 2"/><path d="M1291 582 L1294.5 586 L1298 582 M1294.5 586 V590" stroke="#ccc" stroke-width="1" fill="none"/><path d="M1317 640 L1324 648 M1324 640 L1317 648" stroke="#ccc" stroke-width="1"/><path d="M1227 639 h7 l-7 8 h7" stroke="#ccc" stroke-width="1" fill="none"/></svg>
<div class="a" style="left:0px;top:1001px;width:1920px;height:39px;background:#d5dbe8;"></div>
<div class="a" style="left:2px;top:1020px;width:1915px;height:1px;background:#a0a0a0;"></div>
<div class="a" style="left:1340px;top:1003px;width:132px;height:17px;background:#fff;"></div>
<div class="a" style="left:1336px;top:1004px;width:2px;height:15px;background:repeating-linear-gradient(#a8acb8 0 1px,transparent 1px 3px)"></div>
<div class="a" style="left:1476px;top:1004px;width:2px;height:15px;background:repeating-linear-gradient(#a8acb8 0 1px,transparent 1px 3px)"></div>
<div class="t" style="left:1486px;top:1003px;">绝对 XY 上视图</div>
<div class="a" style="left:1592px;top:1004px;width:1px;height:15px;background:#a0a0a0;"></div>
<div class="t" style="left:1601px;top:1003px;">绝对视图</div>
<div class="a" style="left:1658px;top:1004px;width:2px;height:15px;background:repeating-linear-gradient(#a8acb8 0 1px,transparent 1px 3px)"></div>
<svg style="left:1668px;top:1003.5px" width="50" height="18.5" viewBox="1668 1003.5 50 18.5"><text x="1668" y="1016" font-size="12.5" fill="#000" font-weight="bold" font-family="Liberation Sans, sans-serif" textLength="46" lengthAdjust="spacingAndGlyphs">LAYER0</text></svg>
<div class="a" style="left:1726px;top:1004px;width:1px;height:15px;background:#a0a0a0;"></div>
<div class="a" style="left:1757px;top:1004px;width:1px;height:15px;background:#a0a0a0;"></div>
<div class="a" style="left:1762px;top:1005px;width:32px;height:12px;background:#48618a;"></div>
<div class="a" style="left:1805px;top:1005px;width:32px;height:12px;background:#48618a;"></div>
<div class="a" style="left:1848px;top:1005px;width:32px;height:12px;background:#48618a;"></div>
<div class="a" style="left:1800px;top:1004px;width:1px;height:15px;background:#a0a0a0;"></div>
<div class="a" style="left:1843px;top:1004px;width:1px;height:15px;background:#a0a0a0;"></div>
<div class="a" style="left:1886px;top:1004px;width:1px;height:15px;background:#a0a0a0;"></div>
<svg style="left:1894px;top:1003px" width="14" height="14" viewBox="0 0 14 14"><circle cx="7" cy="7" r="6.5" fill="#1a2acc"/><path d="M3 4 Q6 2 8 5 Q6 8 3 7Z M8 9 Q11 6 13 8 Q11 12 8 11Z" fill="#22cc22"/></svg>
<div class="a" style="left:1132px;top:1024px;width:1px;height:14px;background:#a0a0a0;"></div>
<div class="a" style="left:1175px;top:1024px;width:1px;height:14px;background:#a0a0a0;"></div>
<div class="a" style="left:1206px;top:1024px;width:1px;height:14px;background:#a0a0a0;"></div>
<div class="a" style="left:1237px;top:1024px;width:1px;height:14px;background:#a0a0a0;"></div>
<div class="a" style="left:1268px;top:1024px;width:1px;height:14px;background:#a0a0a0;"></div>
<div class="a" style="left:1299px;top:1024px;width:1px;height:14px;background:#a0a0a0;"></div>
<div class="a" style="left:1330px;top:1024px;width:1px;height:14px;background:#a0a0a0;"></div>
<div class="a" style="left:1361px;top:1024px;width:1px;height:14px;background:#a0a0a0;"></div>
<div class="a" style="left:1392px;top:1024px;width:1px;height:14px;background:#a0a0a0;"></div>
<div class="a" style="left:1423px;top:1024px;width:1px;height:14px;background:#a0a0a0;"></div>
<div class="a" style="left:1454px;top:1024px;width:1px;height:14px;background:#a0a0a0;"></div>
<div class="a" style="left:1580px;top:1024px;width:1px;height:14px;background:#a0a0a0;"></div>
<div class="a" style="left:1654px;top:1024px;width:1px;height:14px;background:#a0a0a0;"></div>
<div class="t" style="left:1141px;top:1024px;">拴牢</div>
<svg style="left:1182px;top:1023px" width="17" height="17" viewBox="0 0 17 17"><rect x=".5" y=".5" width="15" height="15" fill="#ccd" stroke="#667" stroke-width="1.4"/><path d="M3 7 A5 5 0 0 1 13 6 M13 9 A5 5 0 0 1 3 10" stroke="#e05070" stroke-width="1.6" fill="none"/></svg>
<div class="a" style="left:1212px;top:1021px;width:18px;height:18px;background:#fbe08a;"></div>
<svg style="left:1212px;top:1023px" width="17" height="17" viewBox="0 0 17 17"><path d="M2 2 L12 8 L8 9 L13 15 L11 16 L6 10 L3 13Z" fill="#d8d8e8" stroke="#556" stroke-width=".7"/><circle cx="5" cy="4" r="3" fill="#dd44cc" opacity=".7"/></svg>
<svg style="left:1245px;top:1023px" width="17" height="17" viewBox="0 0 17 17"><path d="M2 8 L8 2 L15 6 L10 10z" fill="#e0a860"/><rect x="2" y="9" width="9" height="7" fill="#fff" stroke="#446" stroke-width=".7"/><path d="M4 12h5M6.5 10v5" stroke="#2255dd" stroke-width="1.2"/></svg>
<svg style="left:1276px;top:1023px" width="17" height="17" viewBox="0 0 17 17"><path d="M4 5 Q4 1 8 1 Q12 1 12 5 Q12 7 9 9 V11" fill="none" stroke="#4a6cc8" stroke-width="2.2"/><circle cx="9" cy="14" r="1.4" fill="#4a6cc8"/></svg>
<svg style="left:1306px;top:1023px" width="17" height="17" viewBox="0 0 17 17"><path d="M6 3 L10 1 L14 3 V8 L10 10 L6 8Z" fill="#5a90e0" stroke="#334" stroke-width=".5"/><path d="M9 9 L13 7 L17 9 V14 L13 16 L9 14Z" fill="#6a9a9a" stroke="#334" stroke-width=".6"/><path d="M1 11 H8 M5 8 L8 11 L5 14" stroke="#ee1111" stroke-width="1.4" fill="none"/></svg>
<div class="a" style="left:1336px;top:1021px;width:18px;height:18px;background:#fbe08a;"></div>
<svg style="left:1336px;top:1023px" width="17" height="17" viewBox="0 0 17 17"><path d="M2 5 L9 2 L16 5 L9 8Z" fill="#dd44ee"/><path d="M2 5 L9 8 V16 L2 13Z" fill="#8aa0a0" stroke="#334" stroke-width=".6"/><path d="M9 8 L16 5 V13 L9 16Z" fill="#9ab0b0" stroke="#334" stroke-width=".6"/></svg>
<svg style="left:1374px;top:1024px" width="14" height="14" viewBox="0 0 14 14"><rect x="1" y="2" width="11" height="11" fill="#ddd" stroke="#556"/></svg>
<svg style="left:1400px;top:1024px" width="16" height="16" viewBox="0 0 16 16"><circle cx="8" cy="8" r="6.5" fill="none" stroke="#22aa22" stroke-width="2"/><circle cx="8" cy="8" r="1.5" fill="#2233aa"/></svg>
<svg style="left:1428px;top:1024px" width="18" height="16" viewBox="0 0 18 16"><rect x="1" y="3" width="7" height="11" fill="none" stroke="#556"/><rect x="9" y="3" width="7" height="11" fill="none" stroke="#556"/></svg>
<div class="t" style="left:1464px;top:1024px;">LS: 1.00 PS: 1.00</div>
<div class="t" style="left:1589px;top:1024px;">单位: 毫米</div>
<svg style="left:1663px;top:1023px" width="81" height="19" viewBox="1663 1023 81 19"><text x="1663" y="1036" font-size="13" fill="#ee1111" font-weight="normal" font-family="Liberation Sans, sans-serif" textLength="77" lengthAdjust="spacingAndGlyphs">X =-1467.903</text></svg>
<svg style="left:1745px;top:1023px" width="159" height="19" viewBox="1745 1023 159 19"><text x="1745" y="1036" font-size="13" fill="#000" font-weight="normal" font-family="Liberation Sans, sans-serif" textLength="155" lengthAdjust="spacingAndGlyphs">Y = 0903.599 Z = 0000.000</text></svg>
<div class="a" style="left:1369px;top:1009px;width:196px;height:22px;background:#fff;border:1px solid #c8c8c8"></div>
<svg style="left:1357px;top:1004px" width="32" height="32" viewBox="0 0 32 32"><g transform="rotate(-14 16 16)"><path d="M5 7 Q4 3 9 3 L24 3 Q29 3 28 8 L27 24 Q27 29 22 29 L8 29 Q3 29 4 24Z" fill="#f05a22"/><path d="M22 10 Q18 6 12 8 Q8 10 11 14 Q14 17 19 17 Q23 20 19 23 Q14 25 9 21" fill="none" stroke="#fff" stroke-width="3.8" stroke-linecap="round"/></g></svg>
<svg style="left:1392px;top:1011px" width="16" height="18" viewBox="0 0 16 18"><text x="0" y="15" font-size="16" fill="#1a6ad8" font-family="Liberation Sans, sans-serif" font-weight="bold">中</text></svg>
<svg style="left:1415px;top:1011px" width="14" height="18" viewBox="0 0 14 18"><circle cx="3" cy="7" r="2" fill="none" stroke="#1a6ad8" stroke-width="1.3"/><path d="M11 9 Q12 13 8 15" stroke="#1a6ad8" stroke-width="2.2" fill="none"/></svg>
<svg style="left:1436px;top:1012px" width="17" height="17" viewBox="0 0 17 17"><circle cx="8.5" cy="8.5" r="7.3" fill="none" stroke="#1a6ad8" stroke-width="1.7"/><circle cx="6" cy="6.5" r="1.1" fill="#1a6ad8"/><circle cx="11" cy="6.5" r="1.1" fill="#1a6ad8"/><path d="M4.5 10 Q8.5 14 12.5 10" stroke="#1a6ad8" stroke-width="1.4" fill="none"/></svg>
<svg style="left:1459px;top:1011px" width="14" height="18" viewBox="0 0 14 18"><rect x="4" y="1" width="6" height="11" rx="3" fill="#1a6ad8"/><path d="M1.5 8 Q1.5 14.5 7 14.5 Q12.5 14.5 12.5 8 M7 14.5 V17 M4 17.3 H10" stroke="#1a6ad8" stroke-width="1.5" fill="none"/></svg>
<svg style="left:1480px;top:1013px" width="17" height="14" viewBox="0 0 17 14"><rect x="0.5" y="1" width="16" height="12" rx="1.5" fill="#1a6ad8"/><path d="M2.5 4.5h12M2.5 7.5h12" stroke="#fff" stroke-width="1.3" stroke-dasharray="1.6 1.1"/><path d="M4 10.5h9" stroke="#fff" stroke-width="1.3"/></svg>
<svg style="left:1504px;top:1012px" width="15" height="17" viewBox="0 0 15 17"><circle cx="7" cy="4.5" r="4" fill="#b8c4d8"/><path d="M0 16 Q0 9 7 9 Q14 9 14 16Z" fill="#b8c4d8"/><text x="9" y="16.5" font-size="7" fill="#fff" font-family="Liberation Sans, sans-serif">7</text></svg>
<svg style="left:1525px;top:1012px" width="15" height="16" viewBox="0 0 15 16"><path d="M4 1 L6 2.5 Q7.5 3.5 9 2.5 L11 1 L15 4 L13 7.5 L11.5 6.5 V15 H3.5 V6.5 L2 7.5 L0 4Z" fill="#1a6ad8"/></svg>
<svg style="left:1547px;top:1012px" width="14" height="16" viewBox="0 0 14 16"><rect x="0" y="1" width="6" height="6" fill="#1a6ad8"/><rect x="0" y="9" width="6" height="6" fill="#1a6ad8"/><rect x="8" y="9" width="6" height="6" fill="#1a6ad8"/><rect x="8.7" y="1.7" width="4.6" height="4.6" fill="none" stroke="#1a6ad8" stroke-width="1.4"/></svg>
<div class="a" style="left:0px;top:1040px;width:1920px;height:8px;background:#1f1f1f;"></div>
<div class="a" style="left:48px;top:1040px;width:344px;height:8px;background:#f0f0f0;"></div>
<div class="a" style="left:638px;top:1040px;width:48px;height:8px;background:#505050;"></div>
<div class="a" style="left:1915px;top:1040px;width:1px;height:8px;background:#777;"></div>
<div class="t" style="left:1814px;top:1044px;color:#fff;font-size:12px;line-height:14px">15:08</div>
</body></html>
